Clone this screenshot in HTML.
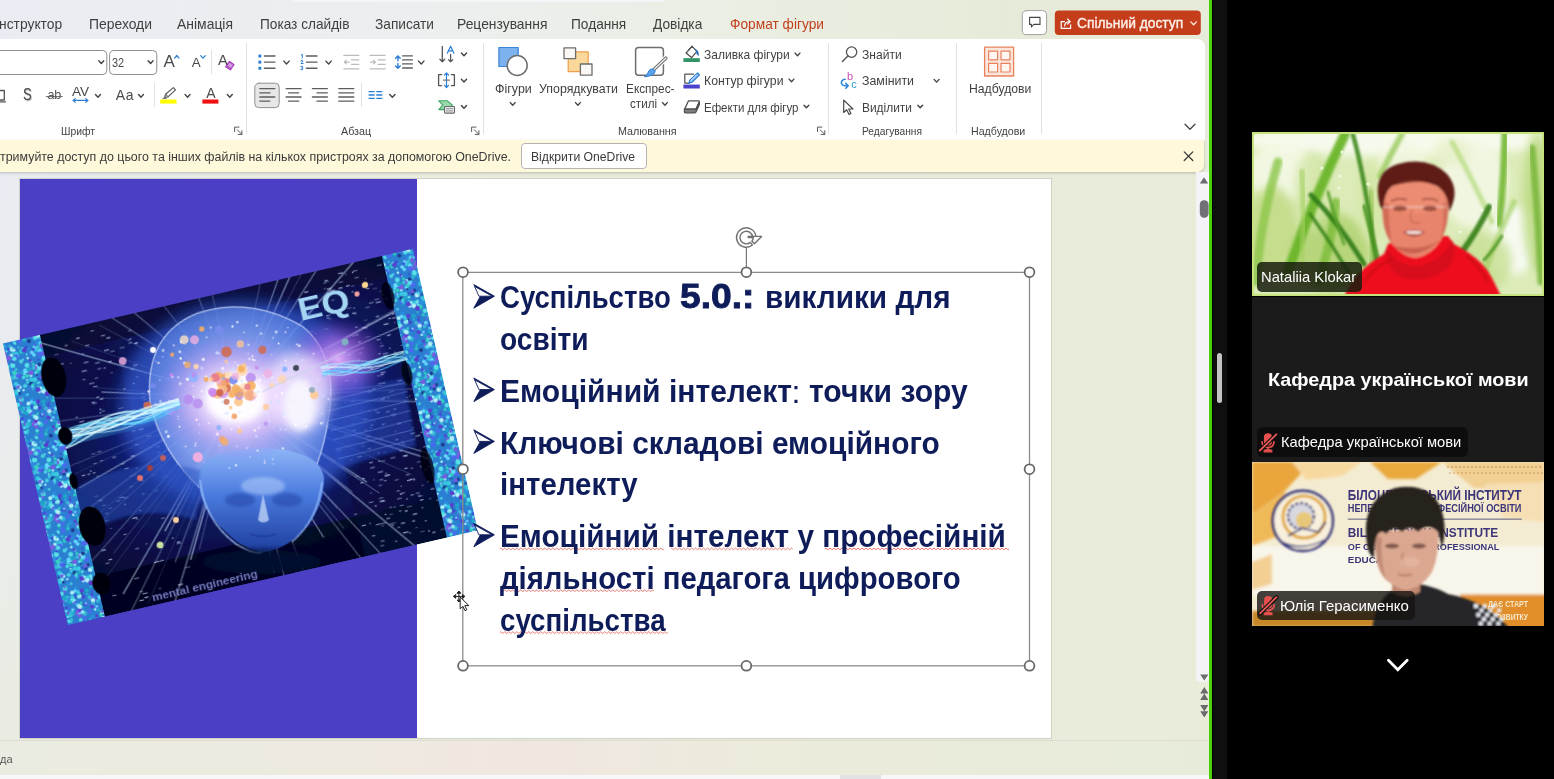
<!DOCTYPE html>
<html lang="uk">
<head>
<meta charset="utf-8">
<title>Zoom - PowerPoint share</title>
<style>
html,body{margin:0;padding:0;background:#000;}
body{width:1554px;height:779px;overflow:hidden;position:relative;font-family:"Liberation Sans",sans-serif;}
.abs{position:absolute;}
#ppt{position:absolute;left:0;top:0;width:1209px;height:779px;overflow:hidden;
  background:linear-gradient(90deg,#e9edf3 0px,#ecefef 420px,#eaeee2 760px,#e6ebd9 1000px,#e7ecda 1209px);}
#work{position:absolute;left:0;top:172px;width:1209px;height:568px;
  background:linear-gradient(90deg,rgba(233,236,221,0) 0px,rgba(233,236,221,.55) 200px,#e9ecdc 520px,#e9ecdb 900px,#e8ecd9 1209px),linear-gradient(180deg,#e9ecf2 0,#e9ecee 40%,#eaece2 100%);}
#ribbon{position:absolute;left:-12px;top:39px;width:1217px;height:101px;background:#fff;border-radius:8px 8px 0 0;}
#ybar{position:absolute;left:-12px;top:140px;width:1216px;height:32px;background:#fff9db;border-radius:0 0 7px 7px;box-shadow:0 1px 3px rgba(0,0,0,.22);}
#botbar{position:absolute;left:0;top:740px;width:1209px;height:35px;border-top:1px solid #dcdcd4;box-sizing:border-box;
  background:linear-gradient(90deg,#ebece1 0px,#eeeadf 330px,#f1e7e1 520px,#ecebdc 760px,#e7ecda 1209px);}
#botstrip{position:absolute;left:0;top:775px;width:1209px;height:4px;background:#f7f7f9;}
#green{position:absolute;left:1208.6px;top:0;width:3.9px;height:779px;background:#4bd10a;}
#zoom{position:absolute;left:1213px;top:0;width:341px;height:779px;background:#000;}
#zgut{position:absolute;left:0;top:0;width:14px;height:779px;background:#0f0f0f;}
.t{position:absolute;white-space:pre;line-height:1;margin:0;padding:0;}
.sep{position:absolute;width:1px;background:#e1e1e1;}
svg{position:absolute;overflow:visible;}
</style>
</head>
<body>

<div id="ppt">
<div class="abs" style="left:292px;top:0;width:372px;height:2px;background:#f4f5f7;border-radius:0 0 3px 3px;"></div>
<div id="work"></div>
<div id="ribbon"></div>
<div id="ybar"></div>
<!-- ribbon group separators -->
<div class="sep" style="left:246px;top:43px;height:91px;"></div>
<div class="sep" style="left:483px;top:43px;height:91px;"></div>
<div class="sep" style="left:828px;top:43px;height:91px;"></div>
<div class="sep" style="left:956px;top:43px;height:91px;"></div>
<div class="sep" style="left:1041px;top:43px;height:91px;"></div>
<div class="sep" style="left:211px;top:50px;height:24px;"></div>
<div class="sep" style="left:154px;top:83px;height:24px;"></div>
<div class="sep" style="left:361px;top:83px;height:24px;"></div>
<!-- OneDrive button -->
<div class="abs" style="left:521.3px;top:143.4px;width:125.4px;height:25.2px;box-sizing:border-box;background:#fff;border:1px solid #b4b4b4;border-radius:4px;"></div>
<svg id="ico" width="1209" height="180" viewBox="0 0 1209 180" style="left:0;top:0;" fill="none" stroke-linecap="round" stroke-linejoin="round">
<!-- font boxes -->
<rect x="-6" y="50.5" width="112.8" height="24" rx="4" fill="#fff" stroke="#8e8e8e"/>
<rect x="109.6" y="50.5" width="47.2" height="24" rx="4" fill="#fff" stroke="#8e8e8e"/>
<!-- chevrons -->
<g stroke="#444" stroke-width="1.4">
<path d="M98.8 60.8l2.49 2.73 2.49-2.73"/>
<path d="M148.1 60.8l2.49 2.73 2.49-2.73"/>
<path d="M95.5 94.5l2.49 2.73 2.49-2.73"/>
<path d="M138.5 94.5l2.49 2.73 2.49-2.73"/>
<path d="M185.1 94.5l2.49 2.73 2.49-2.73"/>
<path d="M227.3 94.5l2.49 2.73 2.49-2.73"/>
<path d="M283.8 61.1l2.67 2.90 2.67-2.90"/>
<path d="M325.9 61.1l2.67 2.90 2.67-2.90"/>
<path d="M418.6 61.1l2.67 2.90 2.67-2.90"/>
<path d="M461.4 53.0l2.58 2.82 2.58-2.82"/>
<path d="M461.4 79.2l2.58 2.82 2.58-2.82"/>
<path d="M461.4 105.5l2.58 2.82 2.58-2.82"/>
<path d="M389.7 94.5l2.67 2.82 2.67-2.82"/>
<path d="M510.3 102.6l2.41 2.64 2.41-2.64"/>
<path d="M575.5 102.6l2.41 2.64 2.41-2.64"/>
<path d="M662.5 102.6l2.41 2.64 2.41-2.64"/>
<path d="M795.1 53.1l2.41 2.64 2.41-2.64"/>
<path d="M789.1 79.1l2.41 2.64 2.41-2.64"/>
<path d="M804.0 105.2l2.41 2.64 2.41-2.64"/>
<path d="M934.1 79.4l2.49 2.73 2.49-2.73"/>
<path d="M917.8 105.2l2.41 2.64 2.41-2.64"/>
<path d="M1185 124.3l5 5 5-5" stroke-width="1.3"/>
</g>
<!-- grow / shrink carets, clear-format eraser -->
<path d="M174.6 58.2l2.2-2.7 2.2 2.7" stroke="#2b7cd3" stroke-width="1.2"/>
<path d="M200.7 55.6l2.3 2.6 2.3-2.6" stroke="#2b7cd3" stroke-width="1.2"/>
<path d="M229.3 61.6l4.6 3-3.6 5.2-4.6-3z" fill="#d79be2" stroke="#a93fc0" stroke-width="1.3"/>
<path d="M226.6 65.7l4.5 3" stroke="#b14bc4" stroke-width="1.2"/>
<!-- row2: underline fragment, strikethrough line, AV arrows -->
<path d="M-1 90.5h5.3v9.5h-5.3M-1 101.8h6.5" stroke="#555" stroke-width="1.3"/>
<path d="M46.3 96.6h16" stroke="#666" stroke-width="1"/>
<path d="M73 100.4h15M75.3 98.6l-2.3 1.8 2.3 1.8M85.7 98.6l2.3 1.8-2.3 1.8" stroke="#2b7cd3" stroke-width="1.15"/>
<!-- highlighter -->
<rect x="160.2" y="99.5" width="16.3" height="4.1" fill="#ffff00"/>
<path d="M173.3 87.6l2.2 2.2-7.3 6.9-3.6.9.9-3.3z" fill="#fff" stroke="#555" stroke-width="1.15"/>
<path d="M165.5 94.3l2.7 2.4" stroke="#555" stroke-width="1"/>
<path d="M164.6 97.6l-2 .9 3.6.1z" fill="#777" stroke="#777" stroke-width=".8"/>
<!-- font colour bar -->
<rect x="202.4" y="99.5" width="16" height="4.1" fill="#f01010"/>
<!-- bullets -->
<g fill="#2b7cd3" stroke="none"><rect x="258.4" y="54.6" width="2.9" height="2.9"/><rect x="258.4" y="60.7" width="2.9" height="2.9"/><rect x="258.4" y="66.8" width="2.9" height="2.9"/></g>
<path d="M264.4 56h10.6M264.4 62.1h10.6M264.4 68.2h10.6" stroke="#5d5d5d" stroke-width="1.35"/>
<!-- numbering -->
<g stroke="#2b7cd3" stroke-width="1"><path d="M301.2 55l1.1-.7v3.7"/><path d="M300.9 60.8q1.6-1.1 2 0.1q0.1.9-2 2.6h2.3"/><path d="M300.9 66.4q2.3-.6 2 .7q-.2.8-1.3.9q1.5.1 1.4 1.1q-.2 1.2-2.2.7"/></g>
<path d="M306.3 56h10.7M306.3 62.1h10.7M306.3 68.2h10.7" stroke="#5d5d5d" stroke-width="1.35"/>
<!-- indents (disabled) -->
<g stroke="#bcbcbc" stroke-width="1.3"><path d="M343.9 55.4h14.9M343.9 68.9h14.9M351.5 59.9h7.3M351.5 64.4h7.3M344.3 62.1h5M346.2 60.3l-1.9 1.8 1.9 1.8"/>
<path d="M370.2 55.4h14.9M370.2 68.9h14.9M378 59.9h7.1M378 64.4h7.1M370.4 62.1h5M373.5 60.3l1.9 1.8-1.9 1.8"/></g>
<!-- line spacing -->
<path d="M397.9 56v4.8M395.6 58.3l2.3-2.4 2.3 2.4M397.9 63.4v4.8M395.6 65.9l2.3 2.4 2.3-2.4" stroke="#2b7cd3" stroke-width="1.4"/>
<path d="M402.6 55.9h9.8M402.6 59.9h9.8M402.6 63.9h9.8M402.6 68h9.8" stroke="#5d5d5d" stroke-width="1.35"/>
<!-- text direction -->
<path d="M442.3 46.4v15.4M439.9 59.2l2.4 2.6 2.4-2.6" stroke="#555" stroke-width="1.3"/>
<path d="M447.3 53.2l3.3-7 3.3 7M448.4 50.9h4.4" stroke="#2b7cd3" stroke-width="1.2"/>
<path d="M450.6 54.4v7.4M448.5 59.6l2.1 2.2 2.1-2.2" stroke="#555" stroke-width="1.25"/>
<!-- align text -->
<path d="M441.6 74.6h-3v11h3M451.4 74.6h3v11h-3" stroke="#555" stroke-width="1.3"/>
<path d="M446.5 73v14.4M444.5 75l2-2.1 2 2.1M444.5 85.4l2 2.1 2-2.1" stroke="#2b7cd3" stroke-width="1.2"/>
<path d="M443.5 80.1h6" stroke="#777" stroke-width="1.1"/>
<!-- smartart -->
<path d="M438.8 100.8h8.6l5 4.3-5 4.5h-8.6l4-4.4z" fill="#9ad8ae" stroke="#3fa660" stroke-width="1.1"/>
<rect x="444.5" y="106.5" width="10" height="6.6" rx=".8" fill="#e8e8e8" stroke="#6a6a6a" stroke-width="1.1"/>
<path d="M446.4 108.7h6.2M446.4 110.9h6.2" stroke="#8a8a8a" stroke-width=".9"/>
<!-- alignment row -->
<rect x="254.8" y="83.2" width="24.4" height="24.4" rx="4" fill="#e7e7e7" stroke="#8f8f8f"/>
<g stroke="#5d5d5d" stroke-width="1.3">
<path d="M259.8 88.6h15M259.8 92.8h10.3M259.8 97h15M259.8 101.2h10"/>
<path d="M286.1 88.6h15M288.5 92.8h10.2M286.1 97h15M288.5 101.2h10.2"/>
<path d="M312.4 88.6h15M317 92.8h10.4M312.4 97h15M317 101.2h10.4"/>
<path d="M338.8 88.6h15M338.8 92.8h15M338.8 97h15M338.8 101.2h15"/>
</g>
<path d="M368.6 91.7h6M376.3 91.7h6M368.6 95h6M376.3 95h6M368.6 98.3h6M376.3 98.3h6" stroke="#2b7cd3" stroke-width="1.3" stroke-linecap="butt"/>
<!-- dialog launchers -->
<g stroke="#5a5a5a" stroke-width="1">
<path d="M234.6 131.5v-4.4h4.4M237.3 129.8l4.4 4.4M241.9 130.7v3.7h-3.7"/>
<path d="M471.6 131.5v-4.4h4.4M474.3 129.8l4.4 4.4M478.9 130.7v3.7h-3.7"/>
<path d="M817.5 131.5v-4.4h4.4M820.2 129.8l4.4 4.4M824.8 130.7v3.7h-3.7"/>
</g>
<!-- shapes -->
<rect x="498.9" y="47.5" width="19.3" height="19" fill="#7cb2ee" stroke="#3a86d8" stroke-width="1.2"/>
<circle cx="517.2" cy="65.5" r="10" fill="#fff" stroke="#6e6e6e" stroke-width="1.5"/>
<!-- arrange -->
<rect x="568.2" y="51.8" width="20" height="19.8" fill="#fad79a" stroke="#ef9f4e" stroke-width="1.2"/>
<rect x="564" y="47.8" width="11.6" height="10.8" fill="#fbf7f4" stroke="#6e6e6e" stroke-width="1.3"/>
<rect x="580.4" y="64" width="11.6" height="11.2" fill="#fbf7f4" stroke="#6e6e6e" stroke-width="1.3"/>
<!-- quick styles -->
<rect x="635.6" y="47.6" width="27.8" height="27.6" rx="3" fill="#fff" stroke="#6e6e6e" stroke-width="1.5"/>
<path d="M666 58L653.4 70" stroke="#fff" stroke-width="5.4"/>
<path d="M666 58L653.4 70" stroke="#6a6a6a" stroke-width="3.2"/>
<path d="M666 58L653.4 70" stroke="#f2f2f2" stroke-width="1.3"/>
<path d="M655.2 71.4q-.6 4.6-10.8 5.4q3.4-2 3.8-4.6q1.2-3.6 4.8-3.2z" fill="#5aa2ec" stroke="#2f7fd6" stroke-width="1"/>
<!-- shape fill -->
<rect x="683.4" y="58.2" width="16.4" height="3.8" fill="#2f9468"/>
<path d="M692 46.4l5 4.9-5.4 6.3-5.5-4.6z" fill="#fff" stroke="#505050" stroke-width="1.25"/>
<path d="M688.9 49.9l3.4-3.7" stroke="#505050" stroke-width="1.2"/>
<path d="M695.6 49.8q3 .6 2.9 5.6q-1.7-.3-1.9-2.8z" fill="#2b6fc0" stroke="#2b6fc0" stroke-width=".7"/>
<!-- shape outline -->
<rect x="683.4" y="84.6" width="16.4" height="3.9" fill="#4a42cf"/>
<path d="M693.4 74.2h-8.6v8.8h4.6" stroke="#555" stroke-width="1.25"/>
<path d="M697.6 73l1.9 1.9-7.5 7.3-3 .9.8-3z" fill="#8fc0f4" stroke="#2b7cd3" stroke-width="1.2"/>
<path d="M696.3 75.2l-5.4 5.2" stroke="#eaf3fd" stroke-width=".9"/>
<!-- shape effects -->
<path d="M688.4 100.9h10.2q1 .1.7 1l-3.4 7.3h-11.3z" fill="#fff" stroke="#4d4d4d" stroke-width="1.3"/>
<path d="M684.4 109.2v2.6q0 1 1 1h9.6q.7 0 1-.7l3.4-7.6v-2.8l-3.5 7.5z" fill="#7d7d7d" stroke="#4d4d4d" stroke-width="1.2"/>
<!-- find -->
<circle cx="851.6" cy="52.1" r="5.2" stroke="#555" stroke-width="1.3"/>
<path d="M847.9 55.9l-5.5 5.7" stroke="#555" stroke-width="1.4"/>
<!-- replace -->
<path d="M845.2 79.2q-4 .6-3.8 3.8q.4 2.8 4.2 2.8h2.4M845.8 83.4l2.4 2.4-2.4 2.4" stroke="#2b86d8" stroke-width="1.6"/>
<!-- select cursor -->
<path d="M843.7 100.2v12.3l3-2.7 2.3 4.7 1.9-.9-2.2-4.6h4.3z" fill="#fff" stroke="#444" stroke-width="1.15"/>
<!-- add-ins -->
<rect x="984.6" y="47.2" width="29" height="28.8" fill="#fbe6de" stroke="#e8825a" stroke-width="1.3"/>
<g fill="#fff6f2" stroke="#e8825a" stroke-width="1.2"><rect x="988.6" y="51.2" width="9" height="8.6"/><rect x="1001" y="51.2" width="9" height="8.6"/><rect x="988.6" y="63.4" width="9" height="8.6"/><rect x="1001" y="63.4" width="9" height="8.6"/></g>
<!-- comment & share buttons -->
<rect x="1022.3" y="10.6" width="24.3" height="24" rx="4" fill="#fff" stroke="#a0a0a0"/>
<path d="M1029.6 17.4h10.4v7h-6.2l-2.4 2.6v-2.6h-1.8z" stroke="#444" stroke-width="1.1"/>
<rect x="1054.8" y="10.5" width="146" height="24.4" rx="4" fill="#c43e1c" stroke="none"/>
<path d="M1064.6 21.6h-3.4v6.8h9.4v-3.6" stroke="#fff" stroke-width="1.2"/>
<path d="M1064.6 26q.4-4.2 5-4.4M1067.6 19l2.6 2.6-2.6 2.6" stroke="#fff" stroke-width="1.2"/>
<path d="M1190.8 21.9l2.8 2.8 2.8-2.8" stroke="#fff1ea" stroke-width="1.3"/>
<!-- ybar close -->
<path d="M1184.2 151.9l8.6 8.6M1192.8 151.9l-8.6 8.6" stroke="#333" stroke-width="1.2"/>
</svg>

<!-- slide -->
<div class="abs" style="left:20px;top:179px;width:1031px;height:558.6px;background:#fff;box-shadow:0 0 0 1px rgba(160,160,150,.35);"></div>
<div class="abs" style="left:20px;top:179px;width:397px;height:558.5px;background:#4b40c5;"></div>

<svg id="brain" width="1209" height="779" viewBox="0 0 1209 779" style="left:0;top:0;">
<defs>
<clipPath id="bclip"><rect x="0" y="0" width="421" height="289"/></clipPath>
<filter id="bl1" x="-5%" y="-5%" width="110%" height="110%"><feGaussianBlur stdDeviation="0.7"/></filter>
<filter id="bl2" x="-20%" y="-20%" width="140%" height="140%"><feGaussianBlur stdDeviation="1.6"/></filter>
<filter id="bl3" x="-20%" y="-20%" width="140%" height="140%"><feGaussianBlur stdDeviation="3"/></filter>
<filter id="bl6" x="-30%" y="-30%" width="160%" height="160%"><feGaussianBlur stdDeviation="7"/></filter>
<radialGradient id="bgG" cx="0.53" cy="0.42" r="0.6"><stop offset="0" stop-color="#2f50c4"/><stop offset="0.38" stop-color="#15288e"/><stop offset="0.62" stop-color="#0b1458"/><stop offset="1" stop-color="#060a34"/></radialGradient>
<radialGradient id="burst"><stop offset="0" stop-color="#fff"/><stop offset="0.3" stop-color="#fdf0ff" stop-opacity=".95"/><stop offset="0.6" stop-color="#dcb4f6" stop-opacity=".6"/><stop offset="1" stop-color="#8a6ae8" stop-opacity="0"/></radialGradient>
<radialGradient id="dome" cx=".5" cy=".55" r=".6"><stop offset="0" stop-color="#dfe8ff" stop-opacity=".9"/><stop offset="0.6" stop-color="#93aef4" stop-opacity=".8"/><stop offset="1" stop-color="#4f7ce4" stop-opacity=".6"/></radialGradient>
<radialGradient id="pinkG"><stop offset="0" stop-color="#f1b6ff" stop-opacity=".9"/><stop offset="0.5" stop-color="#b46ae6" stop-opacity=".55"/><stop offset="1" stop-color="#7a40c8" stop-opacity="0"/></radialGradient>
<linearGradient id="faceG" x1="0" y1="0" x2="0" y2="1"><stop offset="0" stop-color="#8fb6f8"/><stop offset="0.45" stop-color="#4a7ade"/><stop offset="1" stop-color="#1d3e9e"/></linearGradient>
</defs>
<g transform="translate(240.5 437) rotate(-13) translate(-210.5 -144.5)" clip-path="url(#bclip)"><g filter="url(#bl1)">
<rect x="-2" y="-2" width="425" height="293" fill="url(#bgG)"/>
<rect x="30" y="0" width="360" height="22" fill="#050828" opacity=".5"/>
<rect x="30" y="248" width="360" height="44" fill="#03051c" opacity=".8"/>
<rect x="305" y="125" width="90" height="170" fill="#060a3a" opacity=".5"/>
<rect x="30" y="30" width="80" height="70" fill="#060a3a" opacity=".35"/>
<line x1="214.9" y1="105.5" x2="145.2" y2="244.7" stroke="#cfe2ff" stroke-width="1.3" opacity="0.23"/>
<line x1="214.9" y1="105.5" x2="27.6" y2="62.5" stroke="#cfe2ff" stroke-width="0.6" opacity="0.38"/>
<line x1="214.9" y1="105.5" x2="413.0" y2="153.0" stroke="#cfe2ff" stroke-width="0.6" opacity="0.23"/>
<line x1="214.9" y1="105.5" x2="-25.8" y2="229.0" stroke="#cfe2ff" stroke-width="0.7" opacity="0.28"/>
<line x1="214.9" y1="105.5" x2="12.2" y2="-103.5" stroke="#cfe2ff" stroke-width="1.3" opacity="0.34"/>
<line x1="214.9" y1="105.5" x2="351.3" y2="85.0" stroke="#cfe2ff" stroke-width="1.6" opacity="0.30"/>
<line x1="214.9" y1="105.5" x2="307.4" y2="223.6" stroke="#cfe2ff" stroke-width="0.9" opacity="0.49"/>
<line x1="214.9" y1="105.5" x2="311.4" y2="313.0" stroke="#cfe2ff" stroke-width="1.3" opacity="0.33"/>
<line x1="214.9" y1="105.5" x2="80.5" y2="63.9" stroke="#cfe2ff" stroke-width="0.6" opacity="0.27"/>
<line x1="214.9" y1="105.5" x2="129.0" y2="-78.1" stroke="#cfe2ff" stroke-width="0.9" opacity="0.40"/>
<line x1="214.9" y1="105.5" x2="41.7" y2="158.0" stroke="#cfe2ff" stroke-width="1.5" opacity="0.44"/>
<line x1="214.9" y1="105.5" x2="223.3" y2="333.0" stroke="#cfe2ff" stroke-width="1.2" opacity="0.51"/>
<line x1="214.9" y1="105.5" x2="191.8" y2="-72.0" stroke="#cfe2ff" stroke-width="1.8" opacity="0.24"/>
<line x1="214.9" y1="105.5" x2="-10.3" y2="232.8" stroke="#cfe2ff" stroke-width="0.7" opacity="0.37"/>
<line x1="214.9" y1="105.5" x2="451.1" y2="164.9" stroke="#cfe2ff" stroke-width="1.5" opacity="0.40"/>
<line x1="214.9" y1="105.5" x2="344.9" y2="-23.8" stroke="#cfe2ff" stroke-width="1.4" opacity="0.41"/>
<line x1="214.9" y1="105.5" x2="32.9" y2="5.6" stroke="#cfe2ff" stroke-width="1.6" opacity="0.53"/>
<line x1="214.9" y1="105.5" x2="-24.8" y2="144.8" stroke="#cfe2ff" stroke-width="0.6" opacity="0.45"/>
<line x1="214.9" y1="105.5" x2="34.9" y2="-133.1" stroke="#cfe2ff" stroke-width="1.6" opacity="0.30"/>
<line x1="214.9" y1="105.5" x2="31.3" y2="265.7" stroke="#cfe2ff" stroke-width="0.5" opacity="0.36"/>
<line x1="214.9" y1="105.5" x2="288.7" y2="236.0" stroke="#cfe2ff" stroke-width="0.6" opacity="0.47"/>
<line x1="214.9" y1="105.5" x2="333.2" y2="230.4" stroke="#cfe2ff" stroke-width="1.0" opacity="0.50"/>
<line x1="214.9" y1="105.5" x2="395.4" y2="205.6" stroke="#cfe2ff" stroke-width="1.2" opacity="0.51"/>
<line x1="214.9" y1="105.5" x2="331.6" y2="-145.6" stroke="#cfe2ff" stroke-width="0.9" opacity="0.35"/>
<line x1="214.9" y1="105.5" x2="37.9" y2="322.8" stroke="#cfe2ff" stroke-width="1.7" opacity="0.25"/>
<line x1="214.9" y1="105.5" x2="290.7" y2="257.0" stroke="#cfe2ff" stroke-width="0.8" opacity="0.37"/>
<line x1="214.9" y1="105.5" x2="66.9" y2="12.7" stroke="#cfe2ff" stroke-width="0.5" opacity="0.35"/>
<line x1="214.9" y1="105.5" x2="60.8" y2="271.2" stroke="#cfe2ff" stroke-width="1.7" opacity="0.44"/>
<line x1="214.9" y1="105.5" x2="-19.0" y2="82.7" stroke="#cfe2ff" stroke-width="1.4" opacity="0.22"/>
<line x1="214.9" y1="105.5" x2="426.9" y2="-49.5" stroke="#cfe2ff" stroke-width="1.6" opacity="0.48"/>
<line x1="214.9" y1="105.5" x2="60.6" y2="229.3" stroke="#cfe2ff" stroke-width="0.6" opacity="0.42"/>
<line x1="214.9" y1="105.5" x2="345.7" y2="159.4" stroke="#cfe2ff" stroke-width="0.8" opacity="0.26"/>
<line x1="214.9" y1="105.5" x2="140.4" y2="222.8" stroke="#cfe2ff" stroke-width="0.5" opacity="0.25"/>
<line x1="214.9" y1="105.5" x2="369.0" y2="219.7" stroke="#cfe2ff" stroke-width="0.5" opacity="0.51"/>
<line x1="214.9" y1="105.5" x2="97.8" y2="3.5" stroke="#cfe2ff" stroke-width="0.8" opacity="0.32"/>
<line x1="214.9" y1="105.5" x2="115.7" y2="219.2" stroke="#cfe2ff" stroke-width="1.6" opacity="0.55"/>
<line x1="214.9" y1="105.5" x2="7.5" y2="150.5" stroke="#cfe2ff" stroke-width="0.6" opacity="0.24"/>
<line x1="214.9" y1="105.5" x2="118.7" y2="251.7" stroke="#cfe2ff" stroke-width="1.6" opacity="0.26"/>
<line x1="214.9" y1="105.5" x2="503.5" y2="147.7" stroke="#cfe2ff" stroke-width="1.2" opacity="0.25"/>
<line x1="214.9" y1="105.5" x2="85.2" y2="69.4" stroke="#cfe2ff" stroke-width="1.2" opacity="0.54"/>
<line x1="214.9" y1="105.5" x2="377.2" y2="-82.5" stroke="#cfe2ff" stroke-width="0.8" opacity="0.33"/>
<line x1="214.9" y1="105.5" x2="345.0" y2="332.0" stroke="#cfe2ff" stroke-width="1.2" opacity="0.47"/>
<line x1="214.9" y1="105.5" x2="134.3" y2="252.8" stroke="#cfe2ff" stroke-width="1.6" opacity="0.54"/>
<line x1="214.9" y1="105.5" x2="375.4" y2="-107.9" stroke="#cfe2ff" stroke-width="1.6" opacity="0.46"/>
<line x1="214.9" y1="105.5" x2="246.6" y2="321.2" stroke="#cfe2ff" stroke-width="1.0" opacity="0.21"/>
<line x1="214.9" y1="105.5" x2="389.7" y2="136.5" stroke="#cfe2ff" stroke-width="0.8" opacity="0.44"/>
<line x1="214.9" y1="105.5" x2="413.3" y2="49.9" stroke="#cfe2ff" stroke-width="1.7" opacity="0.55"/>
<line x1="214.9" y1="105.5" x2="399.3" y2="51.9" stroke="#cfe2ff" stroke-width="0.8" opacity="0.28"/>
<line x1="214.9" y1="105.5" x2="269.0" y2="261.1" stroke="#cfe2ff" stroke-width="1.3" opacity="0.52"/>
<line x1="214.9" y1="105.5" x2="328.7" y2="-72.8" stroke="#cfe2ff" stroke-width="1.3" opacity="0.48"/>
<line x1="214.9" y1="105.5" x2="423.6" y2="228.5" stroke="#cfe2ff" stroke-width="1.7" opacity="0.47"/>
<line x1="214.9" y1="105.5" x2="215.1" y2="-105.8" stroke="#cfe2ff" stroke-width="0.7" opacity="0.48"/>
<line x1="214.9" y1="105.5" x2="83.0" y2="336.7" stroke="#cfe2ff" stroke-width="1.8" opacity="0.34"/>
<line x1="214.9" y1="105.5" x2="-22.0" y2="274.4" stroke="#cfe2ff" stroke-width="1.4" opacity="0.26"/>
<line x1="214.9" y1="105.5" x2="323.6" y2="217.0" stroke="#cfe2ff" stroke-width="1.7" opacity="0.48"/>
<line x1="214.9" y1="105.5" x2="379.1" y2="320.4" stroke="#cfe2ff" stroke-width="1.8" opacity="0.43"/>
<line x1="214.9" y1="105.5" x2="83.2" y2="285.8" stroke="#cfe2ff" stroke-width="0.7" opacity="0.20"/>
<line x1="214.9" y1="105.5" x2="451.3" y2="61.8" stroke="#cfe2ff" stroke-width="1.2" opacity="0.53"/>
<line x1="214.9" y1="105.5" x2="-39.6" y2="217.9" stroke="#cfe2ff" stroke-width="1.6" opacity="0.27"/>
<line x1="214.9" y1="105.5" x2="212.8" y2="285.3" stroke="#cfe2ff" stroke-width="0.8" opacity="0.41"/>
<rect x="328.9" y="103.6" width="3.3" height="1.1" fill="#d4e4ff" opacity="0.59"/>
<rect x="382.4" y="42.1" width="2.1" height="1.1" fill="#d4e4ff" opacity="0.56"/>
<rect x="118.8" y="53.6" width="3.4" height="1.1" fill="#d4e4ff" opacity="0.66"/>
<rect x="355.2" y="139.2" width="4.6" height="1.1" fill="#d4e4ff" opacity="0.74"/>
<rect x="47.0" y="146.1" width="3.7" height="1.1" fill="#d4e4ff" opacity="0.68"/>
<rect x="361.7" y="173.3" width="2.3" height="1.1" fill="#d4e4ff" opacity="0.44"/>
<rect x="86.7" y="199.0" width="5.0" height="1.1" fill="#d4e4ff" opacity="0.77"/>
<rect x="349.2" y="43.8" width="2.0" height="1.1" fill="#d4e4ff" opacity="0.52"/>
<rect x="325.0" y="89.6" width="2.0" height="1.1" fill="#d4e4ff" opacity="0.69"/>
<rect x="356.6" y="249.7" width="5.4" height="1.1" fill="#d4e4ff" opacity="0.41"/>
<rect x="353.1" y="235.8" width="2.1" height="1.1" fill="#d4e4ff" opacity="0.52"/>
<rect x="329.8" y="31.4" width="3.0" height="1.1" fill="#d4e4ff" opacity="0.47"/>
<rect x="346.1" y="178.2" width="3.5" height="1.1" fill="#d4e4ff" opacity="0.33"/>
<rect x="128.7" y="29.2" width="2.6" height="1.1" fill="#d4e4ff" opacity="0.75"/>
<rect x="375.7" y="232.0" width="2.5" height="1.1" fill="#d4e4ff" opacity="0.37"/>
<rect x="122.9" y="83.0" width="4.7" height="1.1" fill="#d4e4ff" opacity="0.39"/>
<rect x="120.8" y="227.2" width="1.8" height="1.1" fill="#d4e4ff" opacity="0.73"/>
<rect x="375.9" y="280.4" width="3.2" height="1.1" fill="#d4e4ff" opacity="0.76"/>
<rect x="96.7" y="273.5" width="2.5" height="1.1" fill="#d4e4ff" opacity="0.39"/>
<rect x="124.0" y="86.0" width="3.5" height="1.1" fill="#d4e4ff" opacity="0.39"/>
<rect x="72.5" y="11.1" width="3.5" height="1.1" fill="#d4e4ff" opacity="0.79"/>
<rect x="350.4" y="232.0" width="3.2" height="1.1" fill="#d4e4ff" opacity="0.55"/>
<rect x="354.5" y="65.4" width="2.4" height="1.1" fill="#d4e4ff" opacity="0.40"/>
<rect x="364.1" y="277.0" width="4.8" height="1.1" fill="#d4e4ff" opacity="0.31"/>
<rect x="97.0" y="29.3" width="4.9" height="1.1" fill="#d4e4ff" opacity="0.74"/>
<rect x="324.8" y="18.5" width="2.2" height="1.1" fill="#d4e4ff" opacity="0.43"/>
<rect x="342.4" y="95.3" width="1.6" height="1.1" fill="#d4e4ff" opacity="0.74"/>
<rect x="61.2" y="137.0" width="3.5" height="1.1" fill="#d4e4ff" opacity="0.40"/>
<rect x="86.4" y="45.7" width="3.8" height="1.1" fill="#d4e4ff" opacity="0.50"/>
<rect x="325.7" y="241.5" width="2.1" height="1.1" fill="#d4e4ff" opacity="0.75"/>
<rect x="372.0" y="277.8" width="2.1" height="1.1" fill="#d4e4ff" opacity="0.66"/>
<rect x="376.8" y="179.1" width="4.4" height="1.1" fill="#d4e4ff" opacity="0.71"/>
<rect x="54.3" y="234.1" width="3.8" height="1.1" fill="#d4e4ff" opacity="0.75"/>
<rect x="102.1" y="17.6" width="4.0" height="1.1" fill="#d4e4ff" opacity="0.78"/>
<rect x="75.1" y="178.8" width="4.2" height="1.1" fill="#d4e4ff" opacity="0.54"/>
<rect x="370.9" y="253.8" width="1.9" height="1.1" fill="#d4e4ff" opacity="0.56"/>
<rect x="341.7" y="70.8" width="4.5" height="1.1" fill="#d4e4ff" opacity="0.42"/>
<rect x="99.2" y="138.2" width="4.2" height="1.1" fill="#d4e4ff" opacity="0.68"/>
<rect x="96.3" y="97.6" width="4.1" height="1.1" fill="#d4e4ff" opacity="0.65"/>
<rect x="311.7" y="80.2" width="4.2" height="1.1" fill="#d4e4ff" opacity="0.65"/>
<rect x="325.6" y="134.6" width="4.6" height="1.1" fill="#d4e4ff" opacity="0.80"/>
<rect x="327.4" y="10.8" width="3.3" height="1.1" fill="#d4e4ff" opacity="0.71"/>
<rect x="127.2" y="259.0" width="5.2" height="1.1" fill="#d4e4ff" opacity="0.34"/>
<rect x="365.8" y="42.6" width="4.8" height="1.1" fill="#d4e4ff" opacity="0.55"/>
<rect x="361.9" y="114.8" width="2.1" height="1.1" fill="#d4e4ff" opacity="0.77"/>
<rect x="335.7" y="100.9" width="2.8" height="1.1" fill="#d4e4ff" opacity="0.72"/>
<rect x="42.2" y="265.4" width="2.3" height="1.1" fill="#d4e4ff" opacity="0.31"/>
<rect x="322.3" y="281.7" width="3.9" height="1.1" fill="#d4e4ff" opacity="0.48"/>
<rect x="79.7" y="20.2" width="4.1" height="1.1" fill="#d4e4ff" opacity="0.62"/>
<rect x="385.5" y="58.4" width="3.0" height="1.1" fill="#d4e4ff" opacity="0.78"/>
<rect x="362.9" y="157.6" width="4.4" height="1.1" fill="#d4e4ff" opacity="0.32"/>
<rect x="371.2" y="246.0" width="3.4" height="1.1" fill="#d4e4ff" opacity="0.76"/>
<rect x="315.0" y="88.2" width="4.5" height="1.1" fill="#d4e4ff" opacity="0.79"/>
<rect x="340.5" y="190.6" width="2.0" height="1.1" fill="#d4e4ff" opacity="0.62"/>
<rect x="375.2" y="66.7" width="5.1" height="1.1" fill="#d4e4ff" opacity="0.80"/>
<rect x="81.6" y="54.2" width="3.7" height="1.1" fill="#d4e4ff" opacity="0.46"/>
<rect x="74.4" y="212.9" width="3.2" height="1.1" fill="#d4e4ff" opacity="0.51"/>
<rect x="88.1" y="143.5" width="3.8" height="1.1" fill="#d4e4ff" opacity="0.48"/>
<rect x="102.4" y="31.6" width="5.1" height="1.1" fill="#d4e4ff" opacity="0.49"/>
<rect x="98.8" y="41.1" width="3.2" height="1.1" fill="#d4e4ff" opacity="0.68"/>
<rect x="112.8" y="114.1" width="5.2" height="1.1" fill="#d4e4ff" opacity="0.71"/>
<rect x="117.3" y="67.8" width="2.1" height="1.1" fill="#d4e4ff" opacity="0.79"/>
<rect x="372.6" y="29.5" width="4.6" height="1.1" fill="#d4e4ff" opacity="0.30"/>
<rect x="322.6" y="89.8" width="2.0" height="1.1" fill="#d4e4ff" opacity="0.43"/>
<rect x="98.0" y="88.9" width="5.3" height="1.1" fill="#d4e4ff" opacity="0.40"/>
<rect x="320.1" y="89.2" width="3.3" height="1.1" fill="#d4e4ff" opacity="0.78"/>
<rect x="98.7" y="157.0" width="1.6" height="1.1" fill="#d4e4ff" opacity="0.51"/>
<rect x="333.2" y="184.6" width="1.8" height="1.1" fill="#d4e4ff" opacity="0.41"/>
<rect x="353.5" y="99.3" width="3.2" height="1.1" fill="#d4e4ff" opacity="0.64"/>
<rect x="370.3" y="24.6" width="3.5" height="1.1" fill="#d4e4ff" opacity="0.40"/>
<rect x="317.1" y="215.9" width="2.7" height="1.1" fill="#d4e4ff" opacity="0.78"/>
<rect x="316.5" y="257.3" width="1.7" height="1.1" fill="#d4e4ff" opacity="0.60"/>
<rect x="321.6" y="45.2" width="1.7" height="1.1" fill="#d4e4ff" opacity="0.33"/>
<rect x="380.1" y="37.2" width="1.8" height="1.1" fill="#d4e4ff" opacity="0.38"/>
<rect x="357.4" y="14.8" width="4.2" height="1.1" fill="#d4e4ff" opacity="0.49"/>
<rect x="74.9" y="27.6" width="1.8" height="1.1" fill="#d4e4ff" opacity="0.51"/>
<rect x="349.4" y="104.4" width="4.8" height="1.1" fill="#d4e4ff" opacity="0.71"/>
<rect x="304.3" y="155.5" width="3.3" height="1.1" fill="#d4e4ff" opacity="0.46"/>
<rect x="106.9" y="230.1" width="4.6" height="1.1" fill="#d4e4ff" opacity="0.32"/>
<rect x="305.5" y="59.8" width="1.8" height="1.1" fill="#d4e4ff" opacity="0.60"/>
<rect x="73.9" y="78.4" width="4.4" height="1.1" fill="#d4e4ff" opacity="0.46"/>
<rect x="371.4" y="267.2" width="1.8" height="1.1" fill="#d4e4ff" opacity="0.71"/>
<rect x="363.0" y="224.0" width="5.2" height="1.1" fill="#d4e4ff" opacity="0.71"/>
<rect x="320.6" y="89.7" width="4.3" height="1.1" fill="#d4e4ff" opacity="0.38"/>
<rect x="351.3" y="27.8" width="2.3" height="1.1" fill="#d4e4ff" opacity="0.68"/>
<rect x="322.3" y="156.3" width="2.1" height="1.1" fill="#d4e4ff" opacity="0.51"/>
<rect x="51.3" y="32.6" width="3.5" height="1.1" fill="#d4e4ff" opacity="0.65"/>
<rect x="348.3" y="252.0" width="2.4" height="1.1" fill="#d4e4ff" opacity="0.57"/>
<rect x="366.8" y="87.1" width="3.8" height="1.1" fill="#d4e4ff" opacity="0.49"/>
<rect x="106.9" y="71.0" width="2.6" height="1.1" fill="#d4e4ff" opacity="0.75"/>
<rect x="58.6" y="146.0" width="2.4" height="1.1" fill="#d4e4ff" opacity="0.70"/>
<rect x="387.2" y="249.7" width="2.4" height="1.1" fill="#d4e4ff" opacity="0.52"/>
<rect x="74.9" y="58.3" width="5.4" height="1.1" fill="#d4e4ff" opacity="0.59"/>
<rect x="332.8" y="172.4" width="4.6" height="1.1" fill="#d4e4ff" opacity="0.63"/>
<rect x="356.1" y="66.1" width="3.0" height="1.1" fill="#d4e4ff" opacity="0.37"/>
<rect x="360.8" y="258.3" width="4.8" height="1.1" fill="#d4e4ff" opacity="0.71"/>
<rect x="78.0" y="62.1" width="4.7" height="1.1" fill="#d4e4ff" opacity="0.57"/>
<rect x="346.9" y="48.7" width="3.6" height="1.1" fill="#d4e4ff" opacity="0.63"/>
<rect x="387.2" y="90.9" width="5.3" height="1.1" fill="#d4e4ff" opacity="0.46"/>
<rect x="331.4" y="183.9" width="3.1" height="1.1" fill="#d4e4ff" opacity="0.50"/>
<rect x="124.9" y="232.4" width="3.1" height="1.1" fill="#d4e4ff" opacity="0.74"/>
<rect x="321.0" y="45.3" width="4.7" height="1.1" fill="#d4e4ff" opacity="0.50"/>
<rect x="92.4" y="46.3" width="2.6" height="1.1" fill="#d4e4ff" opacity="0.56"/>
<rect x="123.4" y="89.2" width="4.8" height="1.1" fill="#d4e4ff" opacity="0.32"/>
<rect x="361.3" y="113.1" width="5.1" height="1.1" fill="#d4e4ff" opacity="0.61"/>
<rect x="114.6" y="177.4" width="4.0" height="1.1" fill="#d4e4ff" opacity="0.40"/>
<rect x="322.8" y="49.2" width="2.9" height="1.1" fill="#d4e4ff" opacity="0.37"/>
<rect x="333.1" y="238.5" width="4.2" height="1.1" fill="#d4e4ff" opacity="0.63"/>
<rect x="351.0" y="220.8" width="4.1" height="1.1" fill="#d4e4ff" opacity="0.45"/>
<rect x="345.0" y="127.0" width="1.6" height="1.1" fill="#d4e4ff" opacity="0.61"/>
<rect x="320.7" y="236.9" width="4.7" height="1.1" fill="#d4e4ff" opacity="0.50"/>
<rect x="331.6" y="145.2" width="4.1" height="1.1" fill="#d4e4ff" opacity="0.32"/>
<rect x="341.3" y="147.2" width="1.7" height="1.1" fill="#d4e4ff" opacity="0.55"/>
<rect x="75.3" y="280.9" width="4.4" height="1.1" fill="#d4e4ff" opacity="0.71"/>
<rect x="59.0" y="195.4" width="4.4" height="1.1" fill="#d4e4ff" opacity="0.41"/>
<rect x="353.7" y="253.4" width="2.6" height="1.1" fill="#d4e4ff" opacity="0.71"/>
<rect x="54.6" y="169.4" width="4.0" height="1.1" fill="#d4e4ff" opacity="0.42"/>
<rect x="347.4" y="264.4" width="4.2" height="1.1" fill="#d4e4ff" opacity="0.75"/>
<rect x="327.8" y="19.4" width="4.9" height="1.1" fill="#d4e4ff" opacity="0.78"/>
<rect x="81.9" y="75.6" width="3.6" height="1.1" fill="#d4e4ff" opacity="0.73"/>
<rect x="332.7" y="165.4" width="2.9" height="1.1" fill="#d4e4ff" opacity="0.68"/>
<rect x="80.9" y="87.8" width="3.6" height="1.1" fill="#d4e4ff" opacity="0.46"/>
<rect x="376.6" y="208.3" width="4.5" height="1.1" fill="#d4e4ff" opacity="0.41"/>
<rect x="355.1" y="253.2" width="2.0" height="1.1" fill="#d4e4ff" opacity="0.41"/>
<rect x="302.0" y="89.8" width="3.6" height="1.1" fill="#d4e4ff" opacity="0.57"/>
<rect x="326.5" y="178.2" width="3.4" height="1.1" fill="#d4e4ff" opacity="0.37"/>
<rect x="124.4" y="23.6" width="2.1" height="1.1" fill="#d4e4ff" opacity="0.63"/>
<rect x="65.7" y="184.0" width="3.7" height="1.1" fill="#d4e4ff" opacity="0.48"/>
<rect x="383.7" y="142.0" width="2.2" height="1.1" fill="#d4e4ff" opacity="0.30"/>
<rect x="47.4" y="22.1" width="4.6" height="1.1" fill="#d4e4ff" opacity="0.31"/>
<rect x="90.5" y="149.0" width="4.1" height="1.1" fill="#d4e4ff" opacity="0.62"/>
<rect x="78.5" y="88.9" width="1.7" height="1.1" fill="#d4e4ff" opacity="0.74"/>
<rect x="363.0" y="211.7" width="3.4" height="1.1" fill="#d4e4ff" opacity="0.67"/>
<rect x="81.8" y="183.7" width="2.0" height="1.1" fill="#d4e4ff" opacity="0.75"/>
<rect x="123.4" y="79.4" width="3.7" height="1.1" fill="#d4e4ff" opacity="0.52"/>
<rect x="338.0" y="262.3" width="5.1" height="1.1" fill="#d4e4ff" opacity="0.34"/>
<rect x="381.5" y="62.0" width="2.1" height="1.1" fill="#d4e4ff" opacity="0.76"/>
<rect x="334.2" y="256.5" width="4.0" height="1.1" fill="#d4e4ff" opacity="0.65"/>
<rect x="351.9" y="198.5" width="4.9" height="1.1" fill="#d4e4ff" opacity="0.52"/>
<rect x="105.8" y="114.1" width="3.8" height="1.1" fill="#d4e4ff" opacity="0.58"/>
<rect x="327.6" y="262.4" width="2.9" height="1.1" fill="#d4e4ff" opacity="0.37"/>
<rect x="367.1" y="17.8" width="1.8" height="1.1" fill="#d4e4ff" opacity="0.32"/>
<rect x="333.6" y="252.0" width="1.8" height="1.1" fill="#d4e4ff" opacity="0.73"/>
<rect x="122.5" y="62.1" width="1.6" height="1.1" fill="#d4e4ff" opacity="0.77"/>
<rect x="325.9" y="180.5" width="3.4" height="1.1" fill="#d4e4ff" opacity="0.37"/>
<rect x="356.9" y="123.0" width="1.6" height="1.1" fill="#d4e4ff" opacity="0.43"/>
<rect x="363.0" y="218.3" width="3.9" height="1.1" fill="#d4e4ff" opacity="0.54"/>
<rect x="67.3" y="126.5" width="4.6" height="1.1" fill="#d4e4ff" opacity="0.47"/>
<rect x="104.0" y="164.6" width="2.6" height="1.1" fill="#d4e4ff" opacity="0.52"/>
<rect x="88.1" y="7.2" width="3.5" height="1.1" fill="#d4e4ff" opacity="0.55"/>
<rect x="316.2" y="270.2" width="3.6" height="1.1" fill="#d4e4ff" opacity="0.59"/>
<rect x="56.0" y="143.5" width="1.9" height="1.1" fill="#d4e4ff" opacity="0.62"/>
<rect x="49.1" y="179.3" width="2.9" height="1.1" fill="#d4e4ff" opacity="0.50"/>
<rect x="325.9" y="12.9" width="2.3" height="1.1" fill="#d4e4ff" opacity="0.43"/>
<rect x="345.8" y="70.5" width="3.3" height="1.1" fill="#d4e4ff" opacity="0.57"/>
<rect x="366.3" y="166.5" width="3.6" height="1.1" fill="#d4e4ff" opacity="0.73"/>
<rect x="348.7" y="127.1" width="4.6" height="1.1" fill="#d4e4ff" opacity="0.59"/>
<rect x="53.1" y="146.1" width="2.6" height="1.1" fill="#d4e4ff" opacity="0.68"/>
<rect x="114.7" y="205.6" width="3.9" height="1.1" fill="#d4e4ff" opacity="0.47"/>
<rect x="337.6" y="280.6" width="2.2" height="1.1" fill="#d4e4ff" opacity="0.63"/>
<rect x="313.3" y="208.4" width="3.2" height="1.1" fill="#d4e4ff" opacity="0.40"/>
<rect x="309.4" y="134.0" width="1.6" height="1.1" fill="#d4e4ff" opacity="0.73"/>
<rect x="319.6" y="133.9" width="2.1" height="1.1" fill="#d4e4ff" opacity="0.60"/>
<rect x="365.2" y="199.5" width="3.8" height="1.1" fill="#d4e4ff" opacity="0.62"/>
<rect x="364.4" y="199.2" width="4.9" height="1.1" fill="#d4e4ff" opacity="0.64"/>
<rect x="341.3" y="199.4" width="5.1" height="1.1" fill="#d4e4ff" opacity="0.42"/>
<rect x="362.7" y="139.2" width="1.6" height="1.1" fill="#d4e4ff" opacity="0.73"/>
<rect x="379.4" y="96.5" width="1.5" height="1.1" fill="#d4e4ff" opacity="0.72"/>
<rect x="121.9" y="50.4" width="4.6" height="1.1" fill="#d4e4ff" opacity="0.77"/>
<rect x="359.1" y="62.6" width="3.4" height="1.1" fill="#d4e4ff" opacity="0.31"/>
<rect x="343.3" y="267.6" width="2.3" height="1.1" fill="#d4e4ff" opacity="0.64"/>
<rect x="328.3" y="104.1" width="1.7" height="1.1" fill="#d4e4ff" opacity="0.44"/>
<rect x="301.2" y="179.5" width="4.2" height="1.1" fill="#d4e4ff" opacity="0.59"/>
<rect x="347.2" y="274.1" width="5.5" height="1.1" fill="#d4e4ff" opacity="0.78"/>
<rect x="82.7" y="229.4" width="4.0" height="1.1" fill="#d4e4ff" opacity="0.53"/>
<rect x="319.9" y="189.8" width="4.8" height="1.1" fill="#d4e4ff" opacity="0.70"/>
<rect x="371.7" y="40.5" width="4.8" height="1.1" fill="#d4e4ff" opacity="0.48"/>
<rect x="323.5" y="277.3" width="4.2" height="1.1" fill="#d4e4ff" opacity="0.54"/>
<rect x="344.3" y="89.3" width="3.4" height="1.1" fill="#d4e4ff" opacity="0.51"/>
<rect x="358.0" y="241.8" width="1.7" height="1.1" fill="#d4e4ff" opacity="0.71"/>
<rect x="369.0" y="180.8" width="1.6" height="1.1" fill="#d4e4ff" opacity="0.31"/>
<rect x="125.8" y="165.7" width="4.9" height="1.1" fill="#d4e4ff" opacity="0.39"/>
<rect x="369.1" y="224.5" width="2.2" height="1.1" fill="#d4e4ff" opacity="0.75"/>
<rect x="365.5" y="223.5" width="4.9" height="1.1" fill="#d4e4ff" opacity="0.40"/>
<rect x="346.7" y="191.3" width="2.0" height="1.1" fill="#d4e4ff" opacity="0.36"/>
<rect x="352.2" y="22.1" width="3.4" height="1.1" fill="#d4e4ff" opacity="0.37"/>
<rect x="356.7" y="7.8" width="4.9" height="1.1" fill="#d4e4ff" opacity="0.53"/>
<rect x="358.5" y="123.5" width="5.5" height="1.1" fill="#d4e4ff" opacity="0.64"/>
<rect x="57.9" y="174.3" width="4.2" height="1.1" fill="#d4e4ff" opacity="0.77"/>
<rect x="386.4" y="215.0" width="2.1" height="1.1" fill="#d4e4ff" opacity="0.41"/>
<rect x="326.4" y="107.1" width="3.4" height="1.1" fill="#d4e4ff" opacity="0.56"/>
<rect x="318.5" y="75.4" width="1.7" height="1.1" fill="#d4e4ff" opacity="0.44"/>
<rect x="343.4" y="246.9" width="2.9" height="1.1" fill="#d4e4ff" opacity="0.40"/>
<rect x="333.1" y="88.6" width="3.8" height="1.1" fill="#d4e4ff" opacity="0.62"/>
<rect x="303.5" y="156.5" width="1.7" height="1.1" fill="#d4e4ff" opacity="0.45"/>
<rect x="382.7" y="217.4" width="1.7" height="1.1" fill="#d4e4ff" opacity="0.55"/>
<rect x="330.0" y="198.2" width="3.9" height="1.1" fill="#d4e4ff" opacity="0.64"/>
<rect x="60.7" y="34.0" width="2.2" height="1.1" fill="#d4e4ff" opacity="0.32"/>
<rect x="380.4" y="246.7" width="2.1" height="1.1" fill="#d4e4ff" opacity="0.45"/>
<rect x="104.5" y="93.9" width="3.2" height="1.1" fill="#d4e4ff" opacity="0.62"/>
<rect x="124.2" y="233.6" width="4.6" height="1.1" fill="#d4e4ff" opacity="0.51"/>
<rect x="324.6" y="112.9" width="3.9" height="1.1" fill="#d4e4ff" opacity="0.77"/>
<rect x="128.3" y="28.9" width="3.4" height="1.1" fill="#d4e4ff" opacity="0.75"/>
<rect x="320.6" y="39.6" width="5.4" height="1.1" fill="#d4e4ff" opacity="0.34"/>
<rect x="321.2" y="163.0" width="3.3" height="1.1" fill="#d4e4ff" opacity="0.67"/>
<rect x="370.8" y="242.1" width="4.4" height="1.1" fill="#d4e4ff" opacity="0.34"/>
<rect x="362.4" y="258.1" width="1.7" height="1.1" fill="#d4e4ff" opacity="0.32"/>
<rect x="366.7" y="28.0" width="2.7" height="1.1" fill="#d4e4ff" opacity="0.66"/>
<rect x="56.6" y="93.3" width="5.3" height="1.1" fill="#d4e4ff" opacity="0.66"/>
<rect x="83.3" y="106.3" width="4.1" height="1.1" fill="#d4e4ff" opacity="0.61"/>
<rect x="333.9" y="222.6" width="3.8" height="1.1" fill="#d4e4ff" opacity="0.45"/>
<rect x="367.8" y="97.6" width="3.9" height="1.1" fill="#d4e4ff" opacity="0.79"/>
<rect x="352.9" y="275.5" width="2.5" height="1.1" fill="#d4e4ff" opacity="0.49"/>
<rect x="367.9" y="84.2" width="1.5" height="1.1" fill="#d4e4ff" opacity="0.43"/>
<rect x="79.2" y="85.6" width="2.1" height="1.1" fill="#d4e4ff" opacity="0.75"/>
<rect x="386.3" y="195.0" width="5.2" height="1.1" fill="#d4e4ff" opacity="0.47"/>
<rect x="49.5" y="223.4" width="4.4" height="1.1" fill="#d4e4ff" opacity="0.79"/>
<rect x="346.9" y="63.0" width="2.5" height="1.1" fill="#d4e4ff" opacity="0.68"/>
<rect x="340.5" y="219.1" width="2.4" height="1.1" fill="#d4e4ff" opacity="0.59"/>
<rect x="377.9" y="145.7" width="2.3" height="1.1" fill="#d4e4ff" opacity="0.41"/>
<rect x="339.7" y="161.8" width="3.1" height="1.1" fill="#d4e4ff" opacity="0.56"/>
<rect x="303.9" y="245.1" width="3.0" height="1.1" fill="#d4e4ff" opacity="0.53"/>
<rect x="327.8" y="149.4" width="1.6" height="1.1" fill="#d4e4ff" opacity="0.32"/>
<rect x="353.1" y="64.9" width="5.2" height="1.1" fill="#d4e4ff" opacity="0.44"/>
<rect x="360.3" y="271.9" width="2.5" height="1.1" fill="#d4e4ff" opacity="0.32"/>
<rect x="59.7" y="15.6" width="3.0" height="1.1" fill="#d4e4ff" opacity="0.65"/>
<rect x="380.8" y="182.6" width="5.2" height="1.1" fill="#d4e4ff" opacity="0.65"/>
<rect x="49.9" y="270.0" width="4.2" height="1.1" fill="#d4e4ff" opacity="0.50"/>
<rect x="385.7" y="67.2" width="1.7" height="1.1" fill="#d4e4ff" opacity="0.43"/>
<rect x="73.0" y="77.2" width="3.6" height="1.1" fill="#d4e4ff" opacity="0.67"/>
<rect x="342.5" y="214.4" width="5.3" height="1.1" fill="#d4e4ff" opacity="0.64"/>
<rect x="68.3" y="135.9" width="3.0" height="1.1" fill="#d4e4ff" opacity="0.50"/>
<rect x="75.0" y="258.3" width="5.1" height="1.1" fill="#d4e4ff" opacity="0.53"/>
<rect x="122.3" y="27.5" width="4.0" height="1.1" fill="#d4e4ff" opacity="0.49"/>
<rect x="368.5" y="238.5" width="4.0" height="1.1" fill="#d4e4ff" opacity="0.53"/>
<rect x="352.5" y="107.0" width="2.8" height="1.1" fill="#d4e4ff" opacity="0.67"/>
<rect x="339.7" y="246.3" width="2.6" height="1.1" fill="#d4e4ff" opacity="0.51"/>
<rect x="323.9" y="227.9" width="2.5" height="1.1" fill="#d4e4ff" opacity="0.35"/>
<rect x="330.4" y="21.7" width="5.1" height="1.1" fill="#d4e4ff" opacity="0.63"/>
<rect x="342.0" y="214.3" width="5.4" height="1.1" fill="#d4e4ff" opacity="0.52"/>
<rect x="321.0" y="85.9" width="5.1" height="1.1" fill="#d4e4ff" opacity="0.33"/>
<rect x="105.9" y="128.0" width="3.5" height="1.1" fill="#d4e4ff" opacity="0.56"/>
<rect x="369.5" y="57.3" width="3.2" height="1.1" fill="#d4e4ff" opacity="0.76"/>
<rect x="61.2" y="150.0" width="2.4" height="1.1" fill="#d4e4ff" opacity="0.39"/>
<rect x="380.5" y="142.8" width="2.6" height="1.1" fill="#d4e4ff" opacity="0.40"/>
<rect x="375.2" y="91.0" width="1.5" height="1.1" fill="#d4e4ff" opacity="0.65"/>
<rect x="382.3" y="229.7" width="2.8" height="1.1" fill="#d4e4ff" opacity="0.72"/>
<rect x="343.4" y="42.8" width="4.2" height="1.1" fill="#d4e4ff" opacity="0.42"/>
<rect x="322.5" y="108.4" width="3.9" height="1.1" fill="#d4e4ff" opacity="0.30"/>
<rect x="87.7" y="104.5" width="2.5" height="1.1" fill="#d4e4ff" opacity="0.72"/>
<rect x="379.0" y="213.4" width="1.7" height="1.1" fill="#d4e4ff" opacity="0.74"/>
<rect x="354.9" y="228.0" width="2.0" height="1.1" fill="#d4e4ff" opacity="0.42"/>
<rect x="354.5" y="75.1" width="4.8" height="1.1" fill="#d4e4ff" opacity="0.32"/>
<rect x="50.5" y="237.1" width="4.0" height="1.1" fill="#d4e4ff" opacity="0.53"/>
<rect x="63.0" y="203.9" width="1.7" height="1.1" fill="#d4e4ff" opacity="0.36"/>
<rect x="85.4" y="39.5" width="5.0" height="1.1" fill="#d4e4ff" opacity="0.57"/>
<rect x="320.0" y="212.1" width="2.2" height="1.1" fill="#d4e4ff" opacity="0.71"/>
<rect x="348.6" y="151.1" width="3.1" height="1.1" fill="#d4e4ff" opacity="0.77"/>
<rect x="329.8" y="203.5" width="4.9" height="1.1" fill="#d4e4ff" opacity="0.58"/>
<rect x="347.2" y="20.8" width="3.6" height="1.1" fill="#d4e4ff" opacity="0.78"/>
<rect x="348.7" y="9.2" width="1.9" height="1.1" fill="#d4e4ff" opacity="0.39"/>
<rect x="70.5" y="44.5" width="5.4" height="1.1" fill="#d4e4ff" opacity="0.69"/>
<rect x="124.5" y="15.5" width="4.1" height="1.1" fill="#d4e4ff" opacity="0.43"/>
<rect x="101.7" y="177.5" width="2.5" height="1.1" fill="#d4e4ff" opacity="0.56"/>
<rect x="383.7" y="101.9" width="2.2" height="1.1" fill="#d4e4ff" opacity="0.33"/>
<rect x="126.4" y="134.7" width="3.6" height="1.1" fill="#d4e4ff" opacity="0.37"/>
<rect x="311.6" y="165.3" width="2.6" height="1.1" fill="#d4e4ff" opacity="0.67"/>
<rect x="350.9" y="163.4" width="4.1" height="1.1" fill="#d4e4ff" opacity="0.40"/>
<rect x="357.3" y="137.9" width="4.8" height="1.1" fill="#d4e4ff" opacity="0.32"/>
<rect x="357.1" y="115.4" width="5.2" height="1.1" fill="#d4e4ff" opacity="0.38"/>
<rect x="328.5" y="84.6" width="5.5" height="1.1" fill="#d4e4ff" opacity="0.45"/>
<rect x="314.0" y="127.4" width="1.7" height="1.1" fill="#d4e4ff" opacity="0.49"/>
<rect x="80.7" y="279.0" width="4.2" height="1.1" fill="#d4e4ff" opacity="0.77"/>
<rect x="78.7" y="176.1" width="4.9" height="1.1" fill="#d4e4ff" opacity="0.71"/>
<rect x="365.0" y="80.2" width="4.0" height="1.1" fill="#d4e4ff" opacity="0.62"/>
<rect x="336.3" y="217.3" width="3.8" height="1.1" fill="#d4e4ff" opacity="0.55"/>
<rect x="350.3" y="246.9" width="3.9" height="1.1" fill="#d4e4ff" opacity="0.49"/>
<rect x="340.3" y="103.4" width="3.6" height="1.1" fill="#d4e4ff" opacity="0.60"/>
<rect x="300.6" y="111.1" width="2.7" height="1.1" fill="#d4e4ff" opacity="0.57"/>
<rect x="112.7" y="30.3" width="5.2" height="1.1" fill="#d4e4ff" opacity="0.46"/>
<rect x="116.2" y="274.3" width="5.1" height="1.1" fill="#d4e4ff" opacity="0.78"/>
<rect x="322.6" y="260.0" width="4.6" height="1.1" fill="#d4e4ff" opacity="0.57"/>
<rect x="355.2" y="124.7" width="3.4" height="1.1" fill="#d4e4ff" opacity="0.32"/>
<rect x="101.5" y="151.0" width="1.9" height="1.1" fill="#d4e4ff" opacity="0.49"/>
<rect x="77.3" y="272.2" width="3.4" height="1.1" fill="#d4e4ff" opacity="0.52"/>
<rect x="343.3" y="212.0" width="1.9" height="1.1" fill="#d4e4ff" opacity="0.48"/>
<rect x="74.3" y="36.5" width="5.1" height="1.1" fill="#d4e4ff" opacity="0.64"/>
<rect x="387.1" y="180.2" width="3.6" height="1.1" fill="#d4e4ff" opacity="0.71"/>
<rect x="60.3" y="179.9" width="3.9" height="1.1" fill="#d4e4ff" opacity="0.48"/>
<rect x="356.0" y="9.0" width="1.5" height="1.1" fill="#d4e4ff" opacity="0.66"/>
<rect x="90.7" y="167.8" width="4.2" height="1.1" fill="#d4e4ff" opacity="0.40"/>
<rect x="338.1" y="253.2" width="3.6" height="1.1" fill="#d4e4ff" opacity="0.37"/>
<rect x="329.9" y="215.6" width="1.9" height="1.1" fill="#d4e4ff" opacity="0.35"/>
<rect x="376.0" y="124.9" width="4.7" height="1.1" fill="#d4e4ff" opacity="0.63"/>
<rect x="102.2" y="103.7" width="2.2" height="1.1" fill="#d4e4ff" opacity="0.43"/>
<rect x="379.5" y="58.9" width="4.0" height="1.1" fill="#d4e4ff" opacity="0.31"/>
<rect x="61.4" y="127.3" width="4.0" height="1.1" fill="#d4e4ff" opacity="0.42"/>
<rect x="381.9" y="7.7" width="5.0" height="1.1" fill="#d4e4ff" opacity="0.53"/>
<rect x="78.8" y="73.0" width="3.1" height="1.1" fill="#d4e4ff" opacity="0.66"/>
<rect x="327.2" y="12.2" width="5.0" height="1.1" fill="#d4e4ff" opacity="0.34"/>
<rect x="333.4" y="115.3" width="3.0" height="1.1" fill="#d4e4ff" opacity="0.47"/>
<rect x="118.7" y="122.5" width="5.2" height="1.1" fill="#d4e4ff" opacity="0.58"/>
<rect x="341.1" y="15.6" width="4.2" height="1.1" fill="#d4e4ff" opacity="0.47"/>
<rect x="362.1" y="156.4" width="4.6" height="1.1" fill="#d4e4ff" opacity="0.58"/>
<rect x="370.0" y="103.4" width="4.4" height="1.1" fill="#d4e4ff" opacity="0.49"/>
<rect x="384.7" y="62.4" width="4.9" height="1.1" fill="#d4e4ff" opacity="0.64"/>
<rect x="387.8" y="168.2" width="3.0" height="1.1" fill="#d4e4ff" opacity="0.42"/>
<rect x="95.5" y="193.1" width="1.9" height="1.1" fill="#d4e4ff" opacity="0.73"/>
<rect x="322.0" y="162.7" width="2.7" height="1.1" fill="#d4e4ff" opacity="0.49"/>
<rect x="315.6" y="58.0" width="5.1" height="1.1" fill="#d4e4ff" opacity="0.33"/>
<rect x="122.4" y="24.2" width="2.7" height="1.1" fill="#d4e4ff" opacity="0.41"/>
<rect x="363.1" y="239.0" width="3.4" height="1.1" fill="#d4e4ff" opacity="0.61"/>
<rect x="97.3" y="14.2" width="4.2" height="1.1" fill="#d4e4ff" opacity="0.63"/>
<rect x="364.8" y="133.7" width="5.5" height="1.1" fill="#d4e4ff" opacity="0.50"/>
<rect x="308.6" y="257.9" width="4.4" height="1.1" fill="#d4e4ff" opacity="0.66"/>
<rect x="45.6" y="214.9" width="2.1" height="1.1" fill="#d4e4ff" opacity="0.67"/>
<rect x="384.0" y="237.7" width="3.8" height="1.1" fill="#d4e4ff" opacity="0.66"/>
<rect x="338.3" y="264.2" width="1.9" height="1.1" fill="#d4e4ff" opacity="0.68"/>
<rect x="379.5" y="173.6" width="1.7" height="1.1" fill="#d4e4ff" opacity="0.42"/>
<rect x="369.6" y="212.9" width="1.8" height="1.1" fill="#d4e4ff" opacity="0.65"/>
<rect x="365.8" y="151.5" width="2.9" height="1.1" fill="#d4e4ff" opacity="0.77"/>
<rect x="354.2" y="235.1" width="4.0" height="1.1" fill="#d4e4ff" opacity="0.53"/>
<rect x="349.1" y="239.7" width="4.6" height="1.1" fill="#d4e4ff" opacity="0.54"/>
<rect x="376.1" y="78.1" width="3.7" height="1.1" fill="#d4e4ff" opacity="0.78"/>
<rect x="98.1" y="52.4" width="2.9" height="1.1" fill="#d4e4ff" opacity="0.35"/>
<rect x="312.1" y="191.0" width="2.5" height="1.1" fill="#d4e4ff" opacity="0.42"/>
<rect x="339.2" y="198.7" width="2.0" height="1.1" fill="#d4e4ff" opacity="0.65"/>
<rect x="93.7" y="157.3" width="4.5" height="1.1" fill="#d4e4ff" opacity="0.38"/>
<rect x="352.7" y="235.4" width="2.0" height="1.1" fill="#d4e4ff" opacity="0.44"/>
<rect x="318.2" y="89.9" width="1.9" height="1.1" fill="#d4e4ff" opacity="0.45"/>
<rect x="350.3" y="106.2" width="2.2" height="1.1" fill="#d4e4ff" opacity="0.34"/>
<rect x="43.0" y="212.3" width="2.8" height="1.1" fill="#d4e4ff" opacity="0.67"/>
<rect x="356.8" y="58.4" width="3.7" height="1.1" fill="#d4e4ff" opacity="0.30"/>
<rect x="362.7" y="186.1" width="2.5" height="1.1" fill="#d4e4ff" opacity="0.42"/>
<rect x="54.2" y="87.8" width="2.2" height="1.1" fill="#d4e4ff" opacity="0.62"/>
<rect x="331.5" y="235.2" width="4.5" height="1.1" fill="#d4e4ff" opacity="0.46"/>
<rect x="372.6" y="43.6" width="5.2" height="1.1" fill="#d4e4ff" opacity="0.72"/>
<rect x="327.3" y="260.2" width="5.5" height="1.1" fill="#d4e4ff" opacity="0.50"/>
<rect x="348.8" y="49.5" width="2.7" height="1.1" fill="#d4e4ff" opacity="0.59"/>
<rect x="360.5" y="181.7" width="3.1" height="1.1" fill="#d4e4ff" opacity="0.79"/>
<rect x="342.2" y="6.8" width="4.9" height="1.1" fill="#d4e4ff" opacity="0.73"/>
<rect x="339.3" y="21.3" width="4.3" height="1.1" fill="#d4e4ff" opacity="0.75"/>
<rect x="47.5" y="255.5" width="2.2" height="1.1" fill="#d4e4ff" opacity="0.45"/>
<rect x="81.0" y="135.4" width="3.7" height="1.1" fill="#d4e4ff" opacity="0.56"/>
<rect x="79.7" y="274.9" width="5.3" height="1.1" fill="#d4e4ff" opacity="0.61"/>
<rect x="366.0" y="187.7" width="3.8" height="1.1" fill="#d4e4ff" opacity="0.51"/>
<rect x="357.8" y="152.4" width="4.0" height="1.1" fill="#d4e4ff" opacity="0.72"/>
<rect x="61.6" y="188.3" width="3.0" height="1.1" fill="#d4e4ff" opacity="0.59"/>
<rect x="346.6" y="78.1" width="2.4" height="1.1" fill="#d4e4ff" opacity="0.78"/>
<rect x="366.0" y="185.3" width="2.3" height="1.1" fill="#d4e4ff" opacity="0.64"/>
<rect x="351.2" y="164.1" width="2.0" height="1.1" fill="#d4e4ff" opacity="0.56"/>
<rect x="93.8" y="226.9" width="2.0" height="1.1" fill="#d4e4ff" opacity="0.55"/>
<rect x="384.5" y="279.4" width="4.4" height="1.1" fill="#d4e4ff" opacity="0.35"/>
<rect x="115.1" y="161.4" width="4.6" height="1.1" fill="#d4e4ff" opacity="0.37"/>
<rect x="305.1" y="17.5" width="4.3" height="1.1" fill="#d4e4ff" opacity="0.78"/>
<rect x="82.5" y="177.4" width="5.0" height="1.1" fill="#d4e4ff" opacity="0.58"/>
<rect x="331.4" y="238.2" width="4.7" height="1.1" fill="#d4e4ff" opacity="0.67"/>
<rect x="336.3" y="209.5" width="5.3" height="1.1" fill="#d4e4ff" opacity="0.66"/>
<rect x="326.8" y="96.4" width="3.9" height="1.1" fill="#d4e4ff" opacity="0.32"/>
<rect x="344.1" y="129.3" width="4.9" height="1.1" fill="#d4e4ff" opacity="0.59"/>
<rect x="301.8" y="57.1" width="3.7" height="1.1" fill="#d4e4ff" opacity="0.45"/>
<rect x="333.5" y="154.6" width="4.3" height="1.1" fill="#d4e4ff" opacity="0.70"/>
<rect x="125.5" y="140.5" width="3.4" height="1.1" fill="#d4e4ff" opacity="0.32"/>
<rect x="362.2" y="193.5" width="3.1" height="1.1" fill="#d4e4ff" opacity="0.54"/>
<rect x="346.8" y="148.7" width="2.9" height="1.1" fill="#d4e4ff" opacity="0.56"/>
<rect x="69.4" y="52.8" width="2.9" height="1.1" fill="#d4e4ff" opacity="0.53"/>
<rect x="92.8" y="98.6" width="3.4" height="1.1" fill="#d4e4ff" opacity="0.41"/>
<rect x="361.4" y="46.2" width="4.2" height="1.1" fill="#d4e4ff" opacity="0.44"/>
<rect x="337.8" y="164.3" width="3.8" height="1.1" fill="#d4e4ff" opacity="0.37"/>
<rect x="103.5" y="246.8" width="4.6" height="1.1" fill="#d4e4ff" opacity="0.62"/>
<rect x="97.8" y="246.9" width="5.3" height="1.1" fill="#d4e4ff" opacity="0.64"/>
<rect x="370.3" y="241.5" width="2.5" height="1.1" fill="#d4e4ff" opacity="0.74"/>
<rect x="367.9" y="95.2" width="5.5" height="1.1" fill="#d4e4ff" opacity="0.54"/>
<rect x="321.4" y="47.6" width="2.3" height="1.1" fill="#d4e4ff" opacity="0.74"/>
<rect x="335.6" y="262.5" width="3.8" height="1.1" fill="#d4e4ff" opacity="0.37"/>
<rect x="358.9" y="264.7" width="2.9" height="1.1" fill="#d4e4ff" opacity="0.76"/>
<rect x="332.2" y="103.6" width="3.4" height="1.1" fill="#d4e4ff" opacity="0.79"/>
<rect x="363.5" y="94.1" width="2.2" height="1.1" fill="#d4e4ff" opacity="0.75"/>
<rect x="90.1" y="200.4" width="2.4" height="1.1" fill="#d4e4ff" opacity="0.50"/>
<rect x="378.8" y="33.5" width="2.5" height="1.1" fill="#d4e4ff" opacity="0.33"/>
<g transform="translate(210.5 144.5) rotate(13) translate(-240.5 -437)">
<ellipse cx="245" cy="405" rx="125" ry="105" fill="#3c66dc" opacity=".6" filter="url(#bl6)"/>
<path d="M150 402 Q144 334 198 313 Q250 296 302 326 Q340 356 328 422 Q320 468 304 488 L204 492 Q160 452 150 402z" fill="url(#dome)" stroke="#dbe8ff" stroke-opacity=".7" stroke-width="1.3"/>
<path d="M198 474 Q204 450 262 448 Q320 450 324 478 Q324 512 298 536 Q278 552 262 552 Q244 550 226 532 Q198 508 198 474z" fill="url(#faceG)"/>
<ellipse cx="240" cy="500" rx="15" ry="7" fill="#2444a8" opacity=".55" filter="url(#bl2)"/>
<ellipse cx="287" cy="500" rx="15" ry="7" fill="#2444a8" opacity=".55" filter="url(#bl2)"/>
<ellipse cx="263" cy="486" rx="22" ry="9" fill="#c4dcff" opacity=".45" filter="url(#bl2)"/>
<path d="M200 480 Q204 520 236 544 Q256 556 262 552" stroke="#a8ccff" stroke-width="2" fill="none" opacity=".7" filter="url(#bl1)"/>
<path d="M322 482 Q318 520 292 542" stroke="#a8ccff" stroke-width="2" fill="none" opacity=".6" filter="url(#bl1)"/>
<path d="M263 494 L258 520 Q263 525 269 520z" fill="#cfe2ff" opacity=".7" filter="url(#bl1)"/>
<path d="M250 534 q13 5 26 0" stroke="#1e3c9c" stroke-width="2" fill="none" opacity=".7"/>
<ellipse cx="262" cy="562" rx="60" ry="12" fill="#040a30" opacity=".85" filter="url(#bl3)"/>
<path d="M322 398 L404 378 L416 446 L338 468z" fill="#2c4cc0" opacity=".55" filter="url(#bl2)"/>
<path d="M324.0 402.0 L406.0 382.0" stroke="#7fa0f0" stroke-width=".8" opacity=".5"/>
<path d="M326.3 411.5 L407.6 391.5" stroke="#7fa0f0" stroke-width=".8" opacity=".5"/>
<path d="M328.6 421.0 L409.2 401.0" stroke="#7fa0f0" stroke-width=".8" opacity=".5"/>
<path d="M330.9 430.5 L410.8 410.5" stroke="#7fa0f0" stroke-width=".8" opacity=".5"/>
<path d="M333.2 440.0 L412.4 420.0" stroke="#7fa0f0" stroke-width=".8" opacity=".5"/>
<path d="M335.5 449.5 L414.0 429.5" stroke="#7fa0f0" stroke-width=".8" opacity=".5"/>
<path d="M337.8 459.0 L415.6 439.0" stroke="#7fa0f0" stroke-width=".8" opacity=".5"/>
<path d="M60 500 Q120 452 200 470 L196 520 Q130 500 80 540z" fill="#2a52c0" opacity=".5" filter="url(#bl2)"/>
<ellipse cx="338" cy="360" rx="52" ry="44" fill="url(#pinkG)"/>
<ellipse cx="236" cy="398" rx="82" ry="64" fill="url(#burst)"/>
<ellipse cx="236" cy="398" rx="30" ry="24" fill="#fff" opacity=".9" filter="url(#bl3)"/>
<ellipse cx="298" cy="392" rx="34" ry="40" fill="#f4e4ff" opacity=".8" filter="url(#bl6)"/>
<ellipse cx="300" cy="405" rx="16" ry="26" fill="#fff" opacity=".75" filter="url(#bl3)"/>
<circle cx="250.3" cy="401.2" r="0.7" fill="#cfe0ff" opacity="0.89"/>
<circle cx="282.0" cy="393.1" r="1.2" fill="#fff" opacity="0.86"/>
<circle cx="272.1" cy="377.7" r="0.9" fill="#fff" opacity="0.86"/>
<circle cx="179.6" cy="426.7" r="0.9" fill="#fff" opacity="0.95"/>
<circle cx="246.1" cy="374.7" r="1.2" fill="#ffe8f8" opacity="1.00"/>
<circle cx="168.4" cy="436.4" r="1.4" fill="#fff" opacity="0.97"/>
<circle cx="156.0" cy="361.6" r="0.7" fill="#cfe0ff" opacity="0.66"/>
<circle cx="275.9" cy="395.6" r="1.1" fill="#fff" opacity="0.74"/>
<circle cx="208.7" cy="423.4" r="1.2" fill="#e8f0ff" opacity="0.86"/>
<circle cx="201.9" cy="368.1" r="1.3" fill="#cfe0ff" opacity="0.93"/>
<circle cx="228.5" cy="393.4" r="1.2" fill="#ffe8f8" opacity="0.82"/>
<circle cx="199.5" cy="432.8" r="0.8" fill="#cfe0ff" opacity="0.60"/>
<circle cx="169.4" cy="401.2" r="1.3" fill="#cfe0ff" opacity="0.66"/>
<circle cx="203.3" cy="359.4" r="1.5" fill="#fff" opacity="0.85"/>
<circle cx="285.9" cy="429.6" r="0.8" fill="#e8f0ff" opacity="0.70"/>
<circle cx="179.8" cy="351.8" r="1.4" fill="#e8f0ff" opacity="0.81"/>
<circle cx="195.7" cy="443.2" r="1.0" fill="#ffe8f8" opacity="0.69"/>
<circle cx="313.6" cy="353.7" r="1.0" fill="#e8f0ff" opacity="0.73"/>
<circle cx="259.9" cy="380.3" r="1.3" fill="#fff" opacity="0.92"/>
<circle cx="302.2" cy="360.2" r="0.9" fill="#e8f0ff" opacity="0.83"/>
<circle cx="166.2" cy="431.8" r="1.5" fill="#e8f0ff" opacity="0.61"/>
<circle cx="314.2" cy="400.3" r="0.8" fill="#cfe0ff" opacity="0.68"/>
<circle cx="244.1" cy="332.3" r="0.9" fill="#ffe8f8" opacity="0.69"/>
<circle cx="212.6" cy="381.1" r="1.4" fill="#cfe0ff" opacity="0.98"/>
<circle cx="269.2" cy="420.7" r="0.7" fill="#fff" opacity="0.79"/>
<circle cx="263.9" cy="375.5" r="1.2" fill="#ffe8f8" opacity="0.68"/>
<circle cx="315.2" cy="413.7" r="1.4" fill="#cfe0ff" opacity="0.62"/>
<circle cx="248.4" cy="344.9" r="1.0" fill="#e8f0ff" opacity="1.00"/>
<circle cx="237.1" cy="400.0" r="0.7" fill="#fff" opacity="0.65"/>
<circle cx="220.2" cy="440.8" r="0.9" fill="#e8f0ff" opacity="0.79"/>
<circle cx="196.7" cy="419.7" r="1.2" fill="#ffe8f8" opacity="0.95"/>
<circle cx="251.8" cy="390.7" r="0.8" fill="#fff" opacity="0.62"/>
<circle cx="201.8" cy="391.0" r="1.0" fill="#fff" opacity="0.89"/>
<circle cx="322.1" cy="413.8" r="0.7" fill="#fff" opacity="0.65"/>
<circle cx="212.3" cy="393.9" r="1.0" fill="#e8f0ff" opacity="0.69"/>
<circle cx="172.3" cy="377.1" r="1.1" fill="#fff" opacity="0.81"/>
<circle cx="287.8" cy="327.7" r="0.7" fill="#e8f0ff" opacity="0.94"/>
<circle cx="276.9" cy="386.5" r="0.7" fill="#e8f0ff" opacity="0.61"/>
<circle cx="229.3" cy="467.9" r="0.8" fill="#fff" opacity="0.76"/>
<circle cx="193.1" cy="377.2" r="0.6" fill="#fff" opacity="0.86"/>
<circle cx="178.2" cy="377.2" r="1.2" fill="#cfe0ff" opacity="0.76"/>
<circle cx="217.3" cy="434.1" r="1.5" fill="#ffe8f8" opacity="0.90"/>
<circle cx="299.4" cy="345.7" r="1.4" fill="#fff" opacity="0.70"/>
<circle cx="148.6" cy="391.5" r="1.2" fill="#ffe8f8" opacity="1.00"/>
<circle cx="272.9" cy="337.8" r="0.7" fill="#fff" opacity="0.96"/>
<circle cx="310.4" cy="411.2" r="0.9" fill="#ffe8f8" opacity="0.82"/>
<circle cx="203.8" cy="462.2" r="0.6" fill="#ffe8f8" opacity="0.80"/>
<circle cx="163.3" cy="349.4" r="0.8" fill="#ffe8f8" opacity="0.74"/>
<circle cx="323.4" cy="422.1" r="0.8" fill="#cfe0ff" opacity="0.63"/>
<circle cx="261.1" cy="333.7" r="1.4" fill="#cfe0ff" opacity="0.70"/>
<circle cx="285.4" cy="332.2" r="0.9" fill="#ffe8f8" opacity="0.83"/>
<circle cx="258.0" cy="391.9" r="1.3" fill="#cfe0ff" opacity="0.81"/>
<circle cx="159.9" cy="380.2" r="0.8" fill="#e8f0ff" opacity="0.66"/>
<circle cx="222.8" cy="368.5" r="1.5" fill="#fff" opacity="0.73"/>
<circle cx="185.6" cy="446.5" r="1.0" fill="#ffe8f8" opacity="0.66"/>
<circle cx="239.8" cy="411.9" r="0.9" fill="#cfe0ff" opacity="0.78"/>
<circle cx="284.9" cy="415.5" r="1.5" fill="#fff" opacity="0.78"/>
<circle cx="160.4" cy="401.2" r="1.3" fill="#e8f0ff" opacity="0.60"/>
<circle cx="280.8" cy="429.1" r="1.2" fill="#cfe0ff" opacity="0.81"/>
<circle cx="252.8" cy="359.6" r="1.1" fill="#fff" opacity="0.83"/>
<circle cx="270.6" cy="401.8" r="1.2" fill="#cfe0ff" opacity="0.97"/>
<circle cx="238.5" cy="427.2" r="1.0" fill="#ffe8f8" opacity="0.94"/>
<circle cx="256.4" cy="436.4" r="1.3" fill="#cfe0ff" opacity="0.97"/>
<circle cx="229.6" cy="349.6" r="0.6" fill="#cfe0ff" opacity="0.99"/>
<circle cx="178.1" cy="416.3" r="0.8" fill="#e8f0ff" opacity="0.75"/>
<circle cx="162.7" cy="356.7" r="0.8" fill="#cfe0ff" opacity="0.63"/>
<circle cx="264.4" cy="460.2" r="0.7" fill="#ffe8f8" opacity="0.75"/>
<circle cx="180.3" cy="383.7" r="1.4" fill="#fff" opacity="0.64"/>
<circle cx="158.6" cy="362.9" r="1.2" fill="#ffe8f8" opacity="0.77"/>
<circle cx="155.4" cy="404.0" r="1.0" fill="#ffe8f8" opacity="0.65"/>
<circle cx="240.1" cy="387.2" r="0.8" fill="#e8f0ff" opacity="0.76"/>
<circle cx="310.6" cy="407.6" r="1.1" fill="#ffe8f8" opacity="0.91"/>
<circle cx="267.4" cy="413.3" r="0.7" fill="#fff" opacity="0.64"/>
<circle cx="306.0" cy="426.6" r="1.1" fill="#fff" opacity="0.93"/>
<circle cx="254.8" cy="430.5" r="1.4" fill="#ffe8f8" opacity="0.94"/>
<circle cx="274.1" cy="427.1" r="0.6" fill="#e8f0ff" opacity="0.73"/>
<circle cx="273.4" cy="463.8" r="0.8" fill="#cfe0ff" opacity="0.81"/>
<circle cx="284.3" cy="414.7" r="1.2" fill="#cfe0ff" opacity="0.82"/>
<circle cx="185.4" cy="388.8" r="0.6" fill="#cfe0ff" opacity="0.70"/>
<circle cx="199.2" cy="424.4" r="1.1" fill="#cfe0ff" opacity="0.68"/>
<circle cx="300.0" cy="409.3" r="0.9" fill="#ffe8f8" opacity="0.86"/>
<circle cx="232.9" cy="368.7" r="1.4" fill="#cfe0ff" opacity="0.68"/>
<circle cx="296.6" cy="365.4" r="0.6" fill="#cfe0ff" opacity="0.60"/>
<circle cx="321.3" cy="423.2" r="1.3" fill="#fff" opacity="0.71"/>
<circle cx="252.5" cy="356.3" r="1.2" fill="#ffe8f8" opacity="0.76"/>
<circle cx="235.1" cy="362.3" r="0.8" fill="#e8f0ff" opacity="0.77"/>
<circle cx="230.4" cy="382.2" r="1.4" fill="#fff" opacity="0.93"/>
<circle cx="232.8" cy="392.1" r="1.2" fill="#e8f0ff" opacity="0.80"/>
<circle cx="206.5" cy="337.3" r="0.9" fill="#e8f0ff" opacity="0.81"/>
<circle cx="282.8" cy="448.4" r="1.2" fill="#fff" opacity="0.79"/>
<circle cx="246.6" cy="409.7" r="0.6" fill="#e8f0ff" opacity="0.86"/>
<circle cx="235.9" cy="465.4" r="1.2" fill="#e8f0ff" opacity="0.95"/>
<circle cx="264.4" cy="381.3" r="0.7" fill="#ffe8f8" opacity="0.72"/>
<circle cx="247.2" cy="448.0" r="0.9" fill="#e8f0ff" opacity="0.72"/>
<circle cx="236.8" cy="446.3" r="0.8" fill="#e8f0ff" opacity="0.76"/>
<circle cx="290.4" cy="401.0" r="1.2" fill="#e8f0ff" opacity="0.86"/>
<circle cx="228.0" cy="364.3" r="0.7" fill="#e8f0ff" opacity="0.77"/>
<circle cx="229.2" cy="372.8" r="1.3" fill="#fff" opacity="0.86"/>
<circle cx="257.6" cy="450.7" r="1.1" fill="#fff" opacity="0.72"/>
<circle cx="195.3" cy="445.6" r="1.0" fill="#fff" opacity="0.68"/>
<circle cx="231.6" cy="429.4" r="1.1" fill="#fff" opacity="0.68"/>
<circle cx="162.8" cy="404.3" r="1.3" fill="#e8f0ff" opacity="0.83"/>
<circle cx="219.5" cy="445.5" r="0.7" fill="#fff" opacity="0.74"/>
<circle cx="307.2" cy="371.3" r="0.6" fill="#cfe0ff" opacity="0.74"/>
<circle cx="193.1" cy="396.8" r="0.9" fill="#fff" opacity="0.92"/>
<circle cx="234.5" cy="407.0" r="1.1" fill="#fff" opacity="0.90"/>
<circle cx="263.4" cy="409.0" r="1.0" fill="#fff" opacity="0.61"/>
<circle cx="217.4" cy="390.4" r="1.2" fill="#e8f0ff" opacity="0.77"/>
<circle cx="250.2" cy="377.8" r="1.3" fill="#e8f0ff" opacity="0.74"/>
<circle cx="228.7" cy="376.3" r="0.6" fill="#ffe8f8" opacity="0.72"/>
<circle cx="238.3" cy="412.3" r="0.8" fill="#e8f0ff" opacity="0.80"/>
<circle cx="215.2" cy="387.2" r="1.0" fill="#e8f0ff" opacity="0.83"/>
<circle cx="279.2" cy="401.0" r="1.5" fill="#cfe0ff" opacity="0.76"/>
<circle cx="247.7" cy="413.7" r="0.8" fill="#e8f0ff" opacity="0.96"/>
<circle cx="328.4" cy="399.1" r="1.0" fill="#e8f0ff" opacity="0.88"/>
<circle cx="250.1" cy="457.1" r="0.7" fill="#cfe0ff" opacity="1.00"/>
<circle cx="178.4" cy="419.0" r="0.7" fill="#fff" opacity="0.63"/>
<circle cx="206.1" cy="376.6" r="1.1" fill="#fff" opacity="0.93"/>
<circle cx="283.0" cy="410.0" r="0.7" fill="#e8f0ff" opacity="0.85"/>
<circle cx="210.9" cy="327.6" r="0.9" fill="#ffe8f8" opacity="0.84"/>
<circle cx="258.9" cy="427.7" r="1.4" fill="#ffe8f8" opacity="0.61"/>
<circle cx="247.0" cy="367.9" r="1.1" fill="#e8f0ff" opacity="0.66"/>
<circle cx="224.2" cy="411.9" r="0.8" fill="#e8f0ff" opacity="0.87"/>
<circle cx="235.3" cy="377.1" r="0.6" fill="#ffe8f8" opacity="0.62"/>
<circle cx="193.3" cy="385.6" r="0.7" fill="#fff" opacity="0.68"/>
<circle cx="181.2" cy="342.1" r="1.3" fill="#fff" opacity="0.86"/>
<circle cx="305.5" cy="381.9" r="1.3" fill="#ffe8f8" opacity="0.87"/>
<circle cx="239.2" cy="368.6" r="1.3" fill="#cfe0ff" opacity="0.96"/>
<circle cx="237.4" cy="322.2" r="1.3" fill="#e8f0ff" opacity="0.77"/>
<circle cx="276.2" cy="332.0" r="1.4" fill="#cfe0ff" opacity="0.90"/>
<circle cx="180.6" cy="358.4" r="1.2" fill="#fff" opacity="0.99"/>
<circle cx="249.4" cy="358.8" r="1.4" fill="#e8f0ff" opacity="0.70"/>
<circle cx="184.5" cy="363.1" r="1.4" fill="#fff" opacity="0.76"/>
<circle cx="256.9" cy="325.6" r="1.2" fill="#cfe0ff" opacity="0.93"/>
<circle cx="222.3" cy="402.0" r="1.2" fill="#cfe0ff" opacity="0.87"/>
<circle cx="285.5" cy="365.5" r="0.9" fill="#cfe0ff" opacity="0.80"/>
<circle cx="264.4" cy="394.1" r="1.3" fill="#ffe8f8" opacity="0.76"/>
<circle cx="231.1" cy="415.4" r="1.1" fill="#fff" opacity="0.74"/>
<circle cx="278.6" cy="343.5" r="0.9" fill="#fff" opacity="1.00"/>
<circle cx="272.9" cy="459.1" r="1.0" fill="#e8f0ff" opacity="0.65"/>
<circle cx="234.4" cy="381.4" r="1.3" fill="#e8f0ff" opacity="0.76"/>
<circle cx="225.3" cy="413.8" r="0.8" fill="#cfe0ff" opacity="0.96"/>
<circle cx="173.8" cy="345.4" r="1.0" fill="#ffe8f8" opacity="0.73"/>
<circle cx="296.9" cy="344.5" r="1.1" fill="#e8f0ff" opacity="0.76"/>
<circle cx="323.5" cy="396.0" r="0.7" fill="#e8f0ff" opacity="0.78"/>
<circle cx="254.6" cy="360.3" r="0.9" fill="#fff" opacity="0.99"/>
<circle cx="232.5" cy="326.5" r="1.2" fill="#e8f0ff" opacity="0.97"/>
<circle cx="296.6" cy="354.2" r="0.7" fill="#cfe0ff" opacity="0.78"/>
<circle cx="288.2" cy="380.9" r="1.2" fill="#ffe8f8" opacity="0.98"/>
<circle cx="246.1" cy="378.6" r="1.2" fill="#ffe8f8" opacity="0.75"/>
<circle cx="256.3" cy="389.9" r="1.4" fill="#fff" opacity="0.82"/>
<circle cx="166.7" cy="413.2" r="1.4" fill="#ffe8f8" opacity="0.61"/>
<circle cx="227.3" cy="413.1" r="1.5" fill="#cfe0ff" opacity="0.66"/>
<circle cx="183.6" cy="362.7" r="0.6" fill="#ffe8f8" opacity="0.67"/>
<circle cx="163.0" cy="350.8" r="1.2" fill="#e8f0ff" opacity="0.72"/>
<circle cx="187.4" cy="379.3" r="1.5" fill="#fff" opacity="0.92"/>
<circle cx="217.0" cy="352.9" r="1.5" fill="#cfe0ff" opacity="0.88"/>
<circle cx="234.7" cy="417.8" r="1.1" fill="#fff" opacity="0.92"/>
<circle cx="223.8" cy="411.6" r="1.1" fill="#fff" opacity="0.66"/>
<circle cx="237.7" cy="365.1" r="0.9" fill="#fff" opacity="0.83"/>
<circle cx="317.8" cy="380.0" r="0.9" fill="#e8f0ff" opacity="0.71"/>
<circle cx="285.6" cy="360.5" r="1.2" fill="#ffe8f8" opacity="0.76"/>
<circle cx="219.2" cy="353.5" r="0.9" fill="#ffe8f8" opacity="0.71"/>
<circle cx="264.8" cy="462.6" r="1.0" fill="#ffe8f8" opacity="0.85"/>
<circle cx="248.2" cy="353.6" r="0.7" fill="#ffe8f8" opacity="0.86"/>
<circle cx="271.2" cy="354.6" r="0.7" fill="#ffe8f8" opacity="0.75"/>
<circle cx="294.6" cy="365.6" r="0.9" fill="#fff" opacity="0.70"/>
<circle cx="241.8" cy="380.6" r="1.3" fill="#cfe0ff" opacity="0.74"/>
<circle cx="278.6" cy="379.0" r="0.8" fill="#fff" opacity="0.95"/>
<circle cx="295.8" cy="424.8" r="1.3" fill="#fff" opacity="0.97"/>
<circle cx="238.5" cy="401.8" r="4.5" fill="#ffc890" opacity="0.94"/>
<circle cx="170.1" cy="409.5" r="5.2" fill="#b890f0" opacity="0.96"/>
<circle cx="188.3" cy="399.4" r="4.9" fill="#b890f0" opacity="0.97"/>
<circle cx="222.0" cy="384.0" r="3.7" fill="#f6b060" opacity="0.98"/>
<circle cx="218.1" cy="393.8" r="5.1" fill="#ffc890" opacity="0.88"/>
<circle cx="262.4" cy="349.9" r="4.2" fill="#d06a50" opacity="0.86"/>
<circle cx="224.4" cy="390.6" r="4.2" fill="#e87a8a" opacity="0.79"/>
<circle cx="184.2" cy="339.7" r="4.5" fill="#ffe6c8" opacity="0.78"/>
<circle cx="197.8" cy="457.2" r="5.1" fill="#f0b0e0" opacity="0.97"/>
<circle cx="239.2" cy="395.7" r="4.3" fill="#b890f0" opacity="0.85"/>
<circle cx="236.8" cy="376.9" r="4.0" fill="#ffe6c8" opacity="0.82"/>
<circle cx="239.6" cy="431.0" r="2.6" fill="#ffc890" opacity="0.84"/>
<circle cx="209.1" cy="380.2" r="1.9" fill="#ffe6c8" opacity="0.77"/>
<circle cx="228.3" cy="377.6" r="3.0" fill="#f4a46a" opacity="0.86"/>
<circle cx="226.5" cy="351.8" r="5.3" fill="#d06a50" opacity="0.89"/>
<circle cx="228.3" cy="373.5" r="1.9" fill="#7a8cf0" opacity="0.78"/>
<circle cx="226.6" cy="401.9" r="3.0" fill="#d06a50" opacity="0.81"/>
<circle cx="193.5" cy="377.3" r="4.8" fill="#8fb4ff" opacity="0.96"/>
<circle cx="226.0" cy="377.5" r="4.6" fill="#f4a46a" opacity="0.95"/>
<circle cx="221.7" cy="385.6" r="3.1" fill="#f6b060" opacity="0.82"/>
<circle cx="251.4" cy="395.7" r="5.2" fill="#f0b0e0" opacity="0.81"/>
<circle cx="242.0" cy="370.2" r="5.4" fill="#ffd7b0" opacity="0.99"/>
<circle cx="213.6" cy="393.7" r="3.5" fill="#e87a8a" opacity="0.86"/>
<circle cx="223.5" cy="383.8" r="5.0" fill="#d06a50" opacity="0.86"/>
<circle cx="212.6" cy="393.1" r="2.8" fill="#c98af0" opacity="0.77"/>
<circle cx="256.6" cy="367.6" r="1.9" fill="#c98af0" opacity="0.95"/>
<circle cx="221.8" cy="381.2" r="4.5" fill="#8fb4ff" opacity="0.94"/>
<circle cx="250.8" cy="377.9" r="5.1" fill="#b890f0" opacity="0.90"/>
<circle cx="250.9" cy="385.8" r="4.8" fill="#f6b060" opacity="0.93"/>
<circle cx="196.1" cy="366.6" r="2.7" fill="#ffd7b0" opacity="0.91"/>
<circle cx="206.2" cy="379.7" r="2.2" fill="#b890f0" opacity="0.79"/>
<circle cx="197.8" cy="403.6" r="5.0" fill="#b890f0" opacity="0.86"/>
<circle cx="238.7" cy="391.8" r="4.6" fill="#7a8cf0" opacity="0.87"/>
<circle cx="236.3" cy="389.2" r="3.0" fill="#ffd7b0" opacity="0.87"/>
<circle cx="228.7" cy="375.4" r="3.8" fill="#ffe6c8" opacity="0.85"/>
<circle cx="212.3" cy="392.0" r="4.2" fill="#c98af0" opacity="0.93"/>
<circle cx="268.0" cy="373.6" r="4.4" fill="#f0b0e0" opacity="0.79"/>
<circle cx="226.8" cy="381.7" r="3.4" fill="#e87a8a" opacity="0.75"/>
<circle cx="230.6" cy="407.6" r="1.8" fill="#ffc890" opacity="0.87"/>
<circle cx="244.0" cy="387.9" r="5.0" fill="#ffe6c8" opacity="0.98"/>
<circle cx="241.5" cy="368.8" r="3.5" fill="#f6b060" opacity="0.98"/>
<circle cx="271.9" cy="385.4" r="2.5" fill="#ffd7b0" opacity="0.85"/>
<circle cx="237.9" cy="391.7" r="2.5" fill="#7a8cf0" opacity="0.89"/>
<circle cx="233.4" cy="380.1" r="4.3" fill="#7a8cf0" opacity="0.94"/>
<circle cx="206.1" cy="379.3" r="2.4" fill="#f6b060" opacity="0.92"/>
<circle cx="201.8" cy="329.0" r="2.7" fill="#f6b060" opacity="0.87"/>
<circle cx="235.3" cy="376.2" r="3.6" fill="#f0b0e0" opacity="0.77"/>
<circle cx="223.0" cy="392.9" r="5.4" fill="#c98af0" opacity="0.75"/>
<circle cx="221.1" cy="383.8" r="4.5" fill="#f6b060" opacity="0.76"/>
<circle cx="249.2" cy="395.4" r="5.3" fill="#f4a46a" opacity="0.76"/>
<circle cx="228.1" cy="385.2" r="2.6" fill="#f6b060" opacity="0.76"/>
<circle cx="122.7" cy="361.0" r="3.9" fill="#f0b0e0" opacity="0.82"/>
<circle cx="265.8" cy="423.7" r="2.2" fill="#b890f0" opacity="0.77"/>
<circle cx="227.5" cy="388.4" r="3.7" fill="#d06a50" opacity="0.88"/>
<circle cx="239.5" cy="392.6" r="5.1" fill="#f4a46a" opacity="0.77"/>
<circle cx="314.2" cy="395.0" r="4.1" fill="#ffc890" opacity="0.88"/>
<circle cx="172.2" cy="354.6" r="2.1" fill="#f4a46a" opacity="0.92"/>
<circle cx="187.5" cy="364.8" r="3.4" fill="#f6b060" opacity="0.75"/>
<circle cx="219.3" cy="330.3" r="4.7" fill="#7a8cf0" opacity="0.80"/>
<circle cx="218.6" cy="376.1" r="4.4" fill="#f6b060" opacity="0.86"/>
<circle cx="265.9" cy="407.0" r="3.1" fill="#ffc890" opacity="0.77"/>
<circle cx="222.6" cy="389.3" r="5.0" fill="#ffc890" opacity="0.77"/>
<circle cx="219.9" cy="392.7" r="3.6" fill="#d06a50" opacity="0.99"/>
<circle cx="226.2" cy="361.6" r="1.8" fill="#ffc890" opacity="0.76"/>
<circle cx="220.6" cy="382.0" r="3.2" fill="#f0b0e0" opacity="0.98"/>
<circle cx="193.8" cy="375.0" r="2.6" fill="#b890f0" opacity="0.94"/>
<circle cx="235.9" cy="388.8" r="4.4" fill="#f6b060" opacity="0.92"/>
<circle cx="223.3" cy="382.9" r="3.4" fill="#f4a46a" opacity="0.79"/>
<circle cx="284.8" cy="369.1" r="2.7" fill="#8fb4ff" opacity="0.96"/>
<circle cx="247.3" cy="386.9" r="3.2" fill="#e87a8a" opacity="0.86"/>
<circle cx="282.0" cy="379.4" r="4.5" fill="#ffd7b0" opacity="0.82"/>
<circle cx="222.1" cy="439.2" r="3.3" fill="#f4a46a" opacity="0.84"/>
<circle cx="171.5" cy="375.0" r="1.8" fill="#c98af0" opacity="0.97"/>
<circle cx="240.3" cy="344.0" r="3.7" fill="#ffc890" opacity="0.76"/>
<circle cx="244.1" cy="365.2" r="2.0" fill="#ffc890" opacity="0.99"/>
<circle cx="232.0" cy="394.1" r="3.7" fill="#f6b060" opacity="0.92"/>
<circle cx="224.9" cy="442.0" r="3.7" fill="#f6b060" opacity="0.77"/>
<circle cx="234.4" cy="416.3" r="2.8" fill="#f4a46a" opacity="0.93"/>
<circle cx="147.4" cy="405.6" r="4.0" fill="#d06a50" opacity="0.92"/>
<circle cx="194.5" cy="339.8" r="4.5" fill="#f0b0e0" opacity="0.81"/>
<circle cx="218.9" cy="427.6" r="2.6" fill="#8fb4ff" opacity="0.90"/>
<circle cx="215.2" cy="377.6" r="4.5" fill="#e87a8a" opacity="0.91"/>
<circle cx="211.2" cy="379.2" r="2.0" fill="#ffc890" opacity="0.88"/>
<circle cx="254.9" cy="394.3" r="2.1" fill="#ffe6c8" opacity="0.78"/>
<circle cx="153.3" cy="385.7" r="2.8" fill="#7a8cf0" opacity="0.79"/>
<circle cx="268.0" cy="269.0" r="3.4" fill="#e9e4ff"/>
<circle cx="153.0" cy="350.0" r="3.0" fill="#fff"/>
<circle cx="345.0" cy="342.0" r="3.5" fill="#7fb0c0"/>
<circle cx="160.0" cy="545.0" r="3.4" fill="#c8e0a0"/>
<circle cx="120.0" cy="640.0" r="4.0" fill="#ff9a78"/>
<circle cx="176.0" cy="520.0" r="3.0" fill="#ffd0a0"/>
<circle cx="365.0" cy="285.0" r="3.2" fill="#ffd890"/>
<circle cx="357.0" cy="294.0" r="2.6" fill="#f0a0a0"/>
<circle cx="150.0" cy="468.0" r="3.0" fill="#a04040"/>
<circle cx="163.0" cy="458.0" r="3.0" fill="#c06060"/>
<circle cx="140.0" cy="478.0" r="3.0" fill="#e07070"/>
<circle cx="296.0" cy="368.0" r="3.0" fill="#404858"/>
<circle cx="312.0" cy="390.0" r="3.0" fill="#9ab0c0"/>
<path d="M262 392 L345 352" stroke="#c8d4e8" stroke-width="1" opacity=".8"/>
</g>
<path d="M-1.9 110.9 L139.0 98.7" stroke="#49c8ff" stroke-width="20" opacity=".38" stroke-linecap="round" filter="url(#bl3)"/>
<path d="M-1.9 105.8 L4.3 106.9 L10.5 107.4 L16.7 107.2 L22.9 106.5 L29.1 105.3 L35.2 103.7 L41.4 101.9 L47.6 100.1 L53.8 98.5 L60.0 97.3 L66.2 96.4 L72.4 96.1 L78.5 96.2 L84.7 96.8 L90.9 97.6 L97.1 98.5 L103.3 99.4 L109.5 100.2 L115.7 100.7 L121.9 100.9 L128.0 100.8 L134.2 100.2 L140.4 99.5 L146.6 98.5 L152.8 97.5 L159.0 96.5" fill="none" stroke="#a8f4ff" stroke-width="1.7" opacity="0.73"/>
<path d="M-1.9 124.3 L4.3 125.2 L10.5 125.2 L16.7 124.3 L22.9 122.6 L29.1 120.1 L35.2 117.2 L41.4 114.0 L47.6 110.9 L53.8 108.1 L60.0 105.9 L66.2 104.3 L72.4 103.4 L78.5 103.2 L84.7 103.6 L90.9 104.3 L97.1 105.2 L103.3 106.1 L109.5 106.6 L115.7 106.8 L121.9 106.4 L128.0 105.6 L134.2 104.2 L140.4 102.5 L146.6 100.5 L152.8 98.5 L159.0 96.5" fill="none" stroke="#7fe8ff" stroke-width="1.7" opacity="0.71"/>
<path d="M-1.9 101.3 L4.3 102.4 L10.5 103.7 L16.7 105.0 L22.9 106.1 L29.1 107.0 L35.2 107.3 L41.4 107.1 L47.6 106.5 L53.8 105.4 L60.0 104.0 L66.2 102.4 L72.4 100.9 L78.5 99.4 L84.7 98.3 L90.9 97.5 L97.1 97.1 L103.3 97.0 L109.5 97.3 L115.7 97.8 L121.9 98.5 L128.0 99.1 L134.2 99.6 L140.4 99.9 L146.6 99.9 L152.8 99.7 L159.0 99.2" fill="none" stroke="#c8f6ff" stroke-width="1.0" opacity="0.55"/>
<path d="M-1.9 107.6 L4.3 109.0 L10.5 109.7 L16.7 109.7 L22.9 108.9 L29.1 107.6 L35.2 105.8 L41.4 103.8 L47.6 101.8 L53.8 100.0 L60.0 98.7 L66.2 97.8 L72.4 97.6 L78.5 97.9 L84.7 98.7 L90.9 99.8 L97.1 101.1 L103.3 102.3 L109.5 103.4 L115.7 104.1 L121.9 104.5 L128.0 104.4 L134.2 103.9 L140.4 103.1 L146.6 102.1 L152.8 101.0 L159.0 99.9" fill="none" stroke="#4fc8ff" stroke-width="1.0" opacity="0.62"/>
<path d="M-1.9 127.3 L4.3 125.4 L10.5 122.9 L16.7 119.9 L22.9 116.9 L29.1 113.9 L35.2 111.3 L41.4 109.3 L47.6 107.9 L53.8 107.2 L60.0 107.1 L66.2 107.5 L72.4 108.2 L78.5 109.0 L84.7 109.7 L90.9 110.1 L97.1 110.1 L103.3 109.6 L109.5 108.6 L115.7 107.2 L121.9 105.3 L128.0 103.3 L134.2 101.2 L140.4 99.2 L146.6 97.4 L152.8 96.0 L159.0 94.9" fill="none" stroke="#c8f6ff" stroke-width="0.9" opacity="0.78"/>
<path d="M-1.9 112.6 L4.3 113.9 L10.5 114.2 L16.7 113.5 L22.9 112.0 L29.1 109.8 L35.2 107.2 L41.4 104.6 L47.6 102.1 L53.8 100.2 L60.0 99.0 L66.2 98.5 L72.4 98.8 L78.5 99.7 L84.7 101.2 L90.9 102.9 L97.1 104.7 L103.3 106.3 L109.5 107.6 L115.7 108.3 L121.9 108.4 L128.0 108.0 L134.2 107.1 L140.4 105.8 L146.6 104.4 L152.8 103.0 L159.0 101.7" fill="none" stroke="#4fc8ff" stroke-width="1.7" opacity="0.70"/>
<path d="M-1.9 112.8 L4.3 113.5 L10.5 114.4 L16.7 115.3 L22.9 116.0 L29.1 116.3 L35.2 116.2 L41.4 115.5 L47.6 114.3 L53.8 112.7 L60.0 110.7 L66.2 108.6 L72.4 106.5 L78.5 104.6 L84.7 102.9 L90.9 101.7 L97.1 100.8 L103.3 100.3 L109.5 100.2 L115.7 100.3 L121.9 100.4 L128.0 100.6 L134.2 100.6 L140.4 100.4 L146.6 100.0 L152.8 99.2 L159.0 98.2" fill="none" stroke="#c8f6ff" stroke-width="1.8" opacity="0.82"/>
<path d="M-1.9 112.5 L4.3 112.4 L10.5 111.4 L16.7 109.5 L22.9 107.1 L29.1 104.4 L35.2 101.7 L41.4 99.4 L47.6 97.6 L53.8 96.7 L60.0 96.5 L66.2 97.1 L72.4 98.3 L78.5 100.0 L84.7 101.9 L90.9 103.8 L97.1 105.4 L103.3 106.5 L109.5 107.0 L115.7 106.9 L121.9 106.3 L128.0 105.2 L134.2 103.8 L140.4 102.3 L146.6 100.8 L152.8 99.6 L159.0 98.7" fill="none" stroke="#7fe8ff" stroke-width="1.0" opacity="0.64"/>
<path d="M-1.9 112.4 L4.3 113.5 L10.5 114.0 L16.7 113.6 L22.9 112.5 L29.1 110.8 L35.2 108.6 L41.4 106.2 L47.6 103.9 L53.8 101.8 L60.0 100.1 L66.2 99.0 L72.4 98.4 L78.5 98.5 L84.7 99.1 L90.9 100.0 L97.1 101.0 L103.3 102.1 L109.5 102.9 L115.7 103.4 L121.9 103.4 L128.0 103.1 L134.2 102.3 L140.4 101.1 L146.6 99.8 L152.8 98.3 L159.0 96.9" fill="none" stroke="#e0fbff" stroke-width="0.8" opacity="0.66"/>
<path d="M-1.9 110.2 L4.3 108.2 L10.5 106.2 L16.7 104.5 L22.9 103.1 L29.1 102.3 L35.2 101.9 L41.4 101.9 L47.6 102.4 L53.8 103.1 L60.0 104.0 L66.2 104.7 L72.4 105.3 L78.5 105.6 L84.7 105.6 L90.9 105.1 L97.1 104.3 L103.3 103.2 L109.5 102.0 L115.7 100.6 L121.9 99.3 L128.0 98.2 L134.2 97.2 L140.4 96.6 L146.6 96.2 L152.8 96.0 L159.0 96.1" fill="none" stroke="#e0fbff" stroke-width="0.9" opacity="0.73"/>
<path d="M-1.9 117.1 L4.3 115.2 L10.5 113.2 L16.7 111.2 L22.9 109.5 L29.1 108.2 L35.2 107.2 L41.4 106.6 L47.6 106.3 L53.8 106.3 L60.0 106.5 L66.2 106.7 L72.4 106.8 L78.5 106.7 L84.7 106.4 L90.9 105.7 L97.1 104.8 L103.3 103.6 L109.5 102.2 L115.7 100.8 L121.9 99.3 L128.0 97.9 L134.2 96.6 L140.4 95.5 L146.6 94.6 L152.8 93.9 L159.0 93.4" fill="none" stroke="#e0fbff" stroke-width="1.9" opacity="0.92"/>
<path d="M-1.9 101.2 L4.3 99.5 L10.5 98.2 L16.7 97.3 L22.9 96.9 L29.1 97.0 L35.2 97.5 L41.4 98.4 L47.6 99.4 L53.8 100.4 L60.0 101.3 L66.2 101.9 L72.4 102.2 L78.5 102.1 L84.7 101.6 L90.9 100.7 L97.1 99.7 L103.3 98.5 L109.5 97.3 L115.7 96.2 L121.9 95.3 L128.0 94.7 L134.2 94.4 L140.4 94.3 L146.6 94.5 L152.8 94.8 L159.0 95.2" fill="none" stroke="#e0fbff" stroke-width="1.9" opacity="0.74"/>
<path d="M-1.9 97.4 L4.3 99.4 L10.5 101.7 L16.7 103.8 L22.9 105.5 L29.1 106.7 L35.2 107.1 L41.4 106.8 L47.6 105.7 L53.8 104.1 L60.0 102.1 L66.2 99.9 L72.4 97.8 L78.5 96.0 L84.7 94.7 L90.9 93.9 L97.1 93.7 L103.3 94.1 L109.5 94.9 L115.7 96.0 L121.9 97.1 L128.0 98.2 L134.2 99.1 L140.4 99.6 L146.6 99.7 L152.8 99.4 L159.0 98.7" fill="none" stroke="#c8f6ff" stroke-width="2.0" opacity="0.79"/>
<path d="M-1.9 103.4 L4.3 104.1 L10.5 105.2 L16.7 106.5 L22.9 107.7 L29.1 108.6 L35.2 109.2 L41.4 109.2 L47.6 108.6 L53.8 107.5 L60.0 106.0 L66.2 104.2 L72.4 102.2 L78.5 100.3 L84.7 98.7 L90.9 97.3 L97.1 96.3 L103.3 95.8 L109.5 95.7 L115.7 95.9 L121.9 96.3 L128.0 96.7 L134.2 97.1 L140.4 97.4 L146.6 97.4 L152.8 97.1 L159.0 96.6" fill="none" stroke="#7fe8ff" stroke-width="1.0" opacity="0.65"/>
<path d="M324.1 101.4 L430.3 106.0" stroke="#49c8ff" stroke-width="12" opacity=".32" stroke-linecap="round" filter="url(#bl3)"/>
<path d="M304.1 96.1 L310.4 96.7 L316.7 97.7 L323.0 98.9 L329.3 100.1 L335.6 101.1 L341.9 101.6 L348.3 101.6 L354.6 101.1 L360.9 100.3 L367.2 99.4 L373.5 98.5 L379.8 97.8 L386.1 97.5 L392.4 97.5 L398.7 97.9 L405.1 98.5 L411.4 99.2 L417.7 99.8 L424.0 100.2 L430.3 100.5" fill="none" stroke="#e0fbff" stroke-width="0.9" opacity="0.81"/>
<path d="M304.1 103.4 L310.4 101.9 L316.7 100.5 L323.0 99.6 L329.3 99.2 L335.6 99.3 L341.9 99.9 L348.3 100.8 L354.6 101.7 L360.9 102.5 L367.2 102.9 L373.5 103.0 L379.8 102.6 L386.1 101.8 L392.4 100.9 L398.7 100.0 L405.1 99.2 L411.4 98.6 L417.7 98.4 L424.0 98.4 L430.3 98.7" fill="none" stroke="#4fc8ff" stroke-width="1.4" opacity="0.53"/>
<path d="M304.1 100.4 L310.4 102.5 L316.7 103.9 L323.0 104.6 L329.3 104.4 L335.6 103.6 L341.9 102.4 L348.3 101.1 L354.6 100.1 L360.9 99.5 L367.2 99.7 L373.5 100.4 L379.8 101.6 L386.1 103.1 L392.4 104.7 L398.7 106.0 L405.1 106.9 L411.4 107.3 L417.7 107.3 L424.0 107.0 L430.3 106.5" fill="none" stroke="#7fe8ff" stroke-width="1.3" opacity="0.76"/>
<path d="M304.1 98.0 L310.4 99.2 L316.7 101.1 L323.0 103.3 L329.3 105.5 L335.6 107.4 L341.9 108.6 L348.3 109.0 L354.6 108.7 L360.9 107.9 L367.2 106.8 L373.5 105.8 L379.8 105.1 L386.1 104.9 L392.4 105.3 L398.7 106.2 L405.1 107.5 L411.4 109.0 L417.7 110.3 L424.0 111.4 L430.3 112.1" fill="none" stroke="#a8f4ff" stroke-width="0.9" opacity="0.76"/>
<path d="M304.1 100.3 L310.4 100.0 L316.7 100.8 L323.0 102.4 L329.3 104.6 L335.6 107.0 L341.9 109.0 L348.3 110.4 L354.6 111.0 L360.9 110.8 L367.2 109.9 L373.5 108.6 L379.8 107.3 L386.1 106.2 L392.4 105.6 L398.7 105.6 L405.1 106.2 L411.4 107.3 L417.7 108.7 L424.0 110.0 L430.3 111.1" fill="none" stroke="#4fc8ff" stroke-width="1.3" opacity="0.76"/>
<path d="M304.1 100.0 L310.4 98.2 L316.7 96.6 L323.0 95.4 L329.3 95.0 L335.6 95.4 L341.9 96.6 L348.3 98.4 L354.6 100.5 L360.9 102.4 L367.2 104.0 L373.5 105.0 L379.8 105.3 L386.1 105.0 L392.4 104.3 L398.7 103.5 L405.1 102.7 L411.4 102.3 L417.7 102.3 L424.0 102.8 L430.3 103.7" fill="none" stroke="#e0fbff" stroke-width="0.8" opacity="0.59"/>
<path d="M304.1 94.6 L310.4 93.9 L316.7 94.3 L323.0 95.5 L329.3 97.3 L335.6 99.4 L341.9 101.2 L348.3 102.6 L354.6 103.3 L360.9 103.2 L367.2 102.4 L373.5 101.2 L379.8 99.9 L386.1 98.7 L392.4 97.9 L398.7 97.7 L405.1 98.0 L411.4 98.8 L417.7 99.9 L424.0 101.0 L430.3 102.0" fill="none" stroke="#a8f4ff" stroke-width="1.1" opacity="0.88"/>
<path d="M304.1 94.7 L310.4 95.5 L316.7 96.9 L323.0 98.7 L329.3 100.6 L335.6 102.5 L341.9 104.1 L348.3 105.2 L354.6 106.0 L360.9 106.3 L367.2 106.3 L373.5 106.2 L379.8 106.1 L386.1 106.3 L392.4 106.8 L398.7 107.7 L405.1 108.8 L411.4 110.2 L417.7 111.6 L424.0 112.9 L430.3 114.0" fill="none" stroke="#e0fbff" stroke-width="1.5" opacity="0.65"/>
<path d="M304.1 101.2 L310.4 103.6 L316.7 105.7 L323.0 107.1 L329.3 107.5 L335.6 106.9 L341.9 105.5 L348.3 103.5 L354.6 101.5 L360.9 99.8 L367.2 98.6 L373.5 98.3 L379.8 98.6 L386.1 99.6 L392.4 100.9 L398.7 102.3 L405.1 103.4 L411.4 104.0 L417.7 104.1 L424.0 103.6 L430.3 102.8" fill="none" stroke="#a8f4ff" stroke-width="1.0" opacity="0.83"/>
<path d="M304.1 104.7 L310.4 102.3 L316.7 99.9 L323.0 97.8 L329.3 96.5 L335.6 96.3 L341.9 97.0 L348.3 98.5 L354.6 100.4 L360.9 102.4 L367.2 104.0 L373.5 104.9 L379.8 105.1 L386.1 104.6 L392.4 103.5 L398.7 102.1 L405.1 100.7 L411.4 99.7 L417.7 99.1 L424.0 99.0 L430.3 99.5" fill="none" stroke="#4fc8ff" stroke-width="0.9" opacity="0.51"/>
<defs><pattern id="bubL" width="38" height="97" patternUnits="userSpaceOnUse"><rect width="38" height="97" fill="#2a7fd0"/><circle cx="26.9" cy="55.2" r="2.1" fill="#4a6af0"/><circle cx="31.5" cy="0.0" r="1.9" fill="#7a5ae0"/><circle cx="31.5" cy="97.0" r="1.9" fill="#7a5ae0"/><circle cx="23.1" cy="46.1" r="1.8" fill="#1fa8c8"/><circle cx="5.2" cy="23.3" r="1.1" fill="#1fa8c8"/><circle cx="5.7" cy="13.3" r="1.7" fill="#b0f0f8"/><circle cx="12.2" cy="73.1" r="1.2" fill="#1fa8c8"/><circle cx="6.4" cy="56.8" r="1.6" fill="#1fa8c8"/><circle cx="9.6" cy="55.3" r="1.3" fill="#2a8fe0"/><circle cx="36.4" cy="26.1" r="2.4" fill="#1fa8c8"/><circle cx="-1.6" cy="26.1" r="2.4" fill="#1fa8c8"/><circle cx="3.6" cy="42.3" r="2.2" fill="#35c8e0"/><circle cx="34.4" cy="6.8" r="2.1" fill="#2a8fe0"/><circle cx="33.1" cy="40.7" r="1.7" fill="#1a3a90"/><circle cx="11.4" cy="64.3" r="2.0" fill="#b0f0f8"/><circle cx="4.4" cy="23.6" r="2.0" fill="#b0f0f8"/><circle cx="25.8" cy="35.8" r="1.7" fill="#66d8ff"/><circle cx="7.3" cy="7.4" r="2.3" fill="#b0f0f8"/><circle cx="14.5" cy="83.4" r="2.4" fill="#5a3ad0"/><circle cx="9.0" cy="35.5" r="1.7" fill="#5a3ad0"/><circle cx="31.2" cy="68.0" r="1.0" fill="#5a3ad0"/><circle cx="17.9" cy="65.2" r="2.2" fill="#35c8e0"/><circle cx="16.9" cy="33.0" r="2.1" fill="#5a3ad0"/><circle cx="33.8" cy="45.2" r="1.4" fill="#4a6af0"/><circle cx="37.2" cy="8.6" r="2.5" fill="#66d8ff"/><circle cx="-0.8" cy="8.6" r="2.5" fill="#66d8ff"/><circle cx="15.5" cy="93.3" r="2.3" fill="#4a6af0"/><circle cx="14.1" cy="68.7" r="1.5" fill="#3a48d0"/><circle cx="29.1" cy="12.4" r="1.3" fill="#4a6af0"/><circle cx="33.4" cy="11.0" r="1.7" fill="#30d0c0"/><circle cx="15.4" cy="40.8" r="1.0" fill="#b0f0f8"/><circle cx="17.3" cy="32.2" r="1.8" fill="#8fe8f0"/><circle cx="26.8" cy="42.4" r="1.2" fill="#3a48d0"/><circle cx="26.3" cy="65.6" r="2.1" fill="#1fa8c8"/><circle cx="14.0" cy="93.4" r="2.1" fill="#1a3a90"/><circle cx="20.9" cy="19.8" r="1.3" fill="#b0f0f8"/><circle cx="36.7" cy="19.0" r="2.1" fill="#7a5ae0"/><circle cx="-1.3" cy="19.0" r="2.1" fill="#7a5ae0"/><circle cx="24.7" cy="15.9" r="1.0" fill="#3a48d0"/><circle cx="32.3" cy="84.9" r="1.8" fill="#4a6af0"/><circle cx="34.1" cy="57.8" r="1.6" fill="#66d8ff"/><circle cx="10.4" cy="6.8" r="0.9" fill="#2a8fe0"/><circle cx="3.3" cy="24.1" r="1.2" fill="#2a8fe0"/><circle cx="10.1" cy="69.0" r="2.5" fill="#35c8e0"/><circle cx="0.9" cy="8.0" r="1.0" fill="#4a6af0"/><circle cx="38.9" cy="8.0" r="1.0" fill="#4a6af0"/><circle cx="5.6" cy="32.5" r="1.7" fill="#8fe8f0"/><circle cx="11.1" cy="72.5" r="2.3" fill="#8fe8f0"/><circle cx="2.1" cy="8.1" r="1.2" fill="#59e0e8"/><circle cx="40.1" cy="8.1" r="1.2" fill="#59e0e8"/><circle cx="2.4" cy="5.1" r="2.5" fill="#2a8fe0"/><circle cx="40.4" cy="5.1" r="2.5" fill="#2a8fe0"/><circle cx="30.1" cy="70.7" r="1.4" fill="#3a48d0"/><circle cx="5.4" cy="58.7" r="2.5" fill="#48d0e0"/><circle cx="1.9" cy="14.9" r="2.0" fill="#1fa8c8"/><circle cx="39.9" cy="14.9" r="2.0" fill="#1fa8c8"/><circle cx="11.2" cy="1.6" r="1.4" fill="#59e0e8"/><circle cx="11.2" cy="98.6" r="1.4" fill="#59e0e8"/><circle cx="30.5" cy="9.1" r="1.8" fill="#4a6af0"/><circle cx="30.2" cy="43.9" r="1.6" fill="#1a3a90"/><circle cx="8.8" cy="9.1" r="2.0" fill="#b0f0f8"/><circle cx="16.5" cy="1.3" r="2.4" fill="#4a6af0"/><circle cx="16.5" cy="98.3" r="2.4" fill="#4a6af0"/><circle cx="4.1" cy="61.5" r="1.3" fill="#7a5ae0"/><circle cx="19.0" cy="50.6" r="1.4" fill="#35c8e0"/><circle cx="1.2" cy="70.3" r="1.3" fill="#7a5ae0"/><circle cx="39.2" cy="70.3" r="1.3" fill="#7a5ae0"/><circle cx="8.0" cy="69.6" r="1.6" fill="#4a6af0"/><circle cx="34.3" cy="19.8" r="1.4" fill="#5a3ad0"/><circle cx="34.1" cy="12.7" r="1.0" fill="#3a48d0"/><circle cx="29.3" cy="80.2" r="2.0" fill="#38b8d8"/><circle cx="30.2" cy="30.0" r="1.4" fill="#38b8d8"/><circle cx="11.6" cy="75.1" r="1.4" fill="#7a5ae0"/><circle cx="1.9" cy="49.8" r="1.1" fill="#30d0c0"/><circle cx="39.9" cy="49.8" r="1.1" fill="#30d0c0"/><circle cx="23.9" cy="23.8" r="0.9" fill="#8fe8f0"/><circle cx="4.5" cy="49.2" r="1.7" fill="#8fe8f0"/><circle cx="26.1" cy="46.2" r="1.4" fill="#59e0e8"/><circle cx="4.0" cy="6.8" r="1.5" fill="#3a48d0"/><circle cx="2.5" cy="77.9" r="1.7" fill="#3a48d0"/><circle cx="40.5" cy="77.9" r="1.7" fill="#3a48d0"/><circle cx="12.1" cy="46.3" r="2.0" fill="#48d0e0"/><circle cx="26.8" cy="51.9" r="2.1" fill="#38b8d8"/><circle cx="35.5" cy="60.0" r="1.1" fill="#3a48d0"/><circle cx="-2.5" cy="60.0" r="1.1" fill="#3a48d0"/><circle cx="3.3" cy="89.5" r="1.1" fill="#1a3a90"/><circle cx="37.3" cy="88.2" r="1.1" fill="#3a48d0"/><circle cx="-0.7" cy="88.2" r="1.1" fill="#3a48d0"/><circle cx="26.0" cy="3.4" r="2.0" fill="#1a3a90"/><circle cx="28.5" cy="74.8" r="1.6" fill="#59e0e8"/><circle cx="5.5" cy="67.7" r="2.0" fill="#38b8d8"/><circle cx="1.9" cy="27.9" r="2.1" fill="#2a8fe0"/><circle cx="39.9" cy="27.9" r="2.1" fill="#2a8fe0"/><circle cx="20.1" cy="67.9" r="1.4" fill="#1a3a90"/><circle cx="20.2" cy="80.8" r="1.2" fill="#2a8fe0"/><circle cx="14.7" cy="78.3" r="2.0" fill="#8fe8f0"/><circle cx="4.7" cy="23.6" r="2.5" fill="#59e0e8"/><circle cx="3.5" cy="91.5" r="2.4" fill="#38b8d8"/><circle cx="34.4" cy="45.9" r="2.4" fill="#b0f0f8"/><circle cx="30.8" cy="73.6" r="1.5" fill="#4a6af0"/><circle cx="27.9" cy="12.6" r="1.2" fill="#3a48d0"/><circle cx="4.1" cy="78.9" r="1.4" fill="#4a6af0"/><circle cx="1.1" cy="49.7" r="2.2" fill="#38b8d8"/><circle cx="39.1" cy="49.7" r="2.2" fill="#38b8d8"/><circle cx="5.6" cy="82.9" r="1.4" fill="#2a8fe0"/><circle cx="27.7" cy="82.3" r="2.0" fill="#5a3ad0"/><circle cx="15.9" cy="79.7" r="2.3" fill="#b0f0f8"/><circle cx="13.1" cy="76.4" r="1.3" fill="#35c8e0"/><circle cx="34.2" cy="92.3" r="1.4" fill="#1a3a90"/><circle cx="12.1" cy="85.5" r="2.4" fill="#7a5ae0"/><circle cx="14.2" cy="34.2" r="1.5" fill="#59e0e8"/><circle cx="35.8" cy="1.2" r="2.0" fill="#48d0e0"/><circle cx="-2.2" cy="1.2" r="2.0" fill="#48d0e0"/><circle cx="35.8" cy="98.2" r="2.0" fill="#48d0e0"/><circle cx="24.2" cy="86.1" r="2.1" fill="#4a6af0"/><circle cx="31.0" cy="62.5" r="1.0" fill="#30d0c0"/><circle cx="27.7" cy="73.2" r="2.2" fill="#7a5ae0"/><circle cx="19.2" cy="31.6" r="1.6" fill="#7a5ae0"/><circle cx="5.1" cy="52.3" r="1.4" fill="#1a3a90"/><circle cx="2.1" cy="86.9" r="1.2" fill="#8fe8f0"/><circle cx="40.1" cy="86.9" r="1.2" fill="#8fe8f0"/><circle cx="33.4" cy="13.5" r="2.4" fill="#38b8d8"/><circle cx="33.2" cy="52.6" r="2.4" fill="#48d0e0"/><circle cx="33.1" cy="53.1" r="1.6" fill="#8fe8f0"/><circle cx="17.9" cy="44.8" r="2.1" fill="#1a3a90"/><circle cx="8.1" cy="33.0" r="1.3" fill="#59e0e8"/><circle cx="4.5" cy="86.0" r="2.3" fill="#35c8e0"/><circle cx="8.6" cy="6.9" r="1.0" fill="#38b8d8"/><circle cx="2.0" cy="83.4" r="1.9" fill="#7a5ae0"/><circle cx="40.0" cy="83.4" r="1.9" fill="#7a5ae0"/><circle cx="30.5" cy="92.5" r="1.4" fill="#5a3ad0"/><circle cx="33.7" cy="55.9" r="1.4" fill="#8fe8f0"/><circle cx="27.9" cy="30.2" r="2.3" fill="#b0f0f8"/><circle cx="34.8" cy="58.2" r="2.5" fill="#30d0c0"/><circle cx="19.7" cy="47.0" r="1.6" fill="#30d0c0"/><circle cx="36.3" cy="22.0" r="1.2" fill="#66d8ff"/><circle cx="-1.7" cy="22.0" r="1.2" fill="#66d8ff"/><circle cx="13.8" cy="93.0" r="2.0" fill="#59e0e8"/><circle cx="24.9" cy="55.1" r="1.6" fill="#b0f0f8"/><circle cx="16.4" cy="69.6" r="1.6" fill="#59e0e8"/><circle cx="7.0" cy="28.2" r="1.7" fill="#38b8d8"/><circle cx="13.6" cy="21.6" r="2.1" fill="#48d0e0"/><circle cx="2.2" cy="35.6" r="2.4" fill="#38b8d8"/><circle cx="40.2" cy="35.6" r="2.4" fill="#38b8d8"/><circle cx="16.5" cy="36.9" r="2.0" fill="#30d0c0"/><circle cx="15.8" cy="31.7" r="2.5" fill="#66d8ff"/><circle cx="27.8" cy="18.1" r="1.8" fill="#66d8ff"/><circle cx="0.4" cy="84.5" r="1.9" fill="#1fa8c8"/><circle cx="38.4" cy="84.5" r="1.9" fill="#1fa8c8"/><circle cx="38.0" cy="54.4" r="2.2" fill="#2a8fe0"/><circle cx="-0.0" cy="54.4" r="2.2" fill="#2a8fe0"/><circle cx="0.7" cy="63.0" r="2.3" fill="#59e0e8"/><circle cx="38.7" cy="63.0" r="2.3" fill="#59e0e8"/><circle cx="33.0" cy="35.1" r="2.4" fill="#4a6af0"/><circle cx="19.2" cy="87.4" r="2.3" fill="#38b8d8"/><circle cx="34.2" cy="92.6" r="1.7" fill="#30d0c0"/><circle cx="5.9" cy="20.7" r="1.1" fill="#3a48d0"/><circle cx="30.5" cy="41.1" r="1.9" fill="#7a5ae0"/><circle cx="23.0" cy="22.7" r="1.2" fill="#5a3ad0"/><circle cx="17.8" cy="9.0" r="0.9" fill="#8fe8f0"/><circle cx="34.3" cy="16.0" r="2.2" fill="#66d8ff"/><circle cx="9.7" cy="50.1" r="1.2" fill="#b0f0f8"/><circle cx="6.6" cy="84.6" r="2.5" fill="#38b8d8"/><circle cx="27.4" cy="72.7" r="2.0" fill="#38b8d8"/><circle cx="8.2" cy="81.1" r="1.6" fill="#66d8ff"/><circle cx="2.0" cy="91.6" r="1.6" fill="#59e0e8"/><circle cx="40.0" cy="91.6" r="1.6" fill="#59e0e8"/><circle cx="33.0" cy="87.1" r="1.8" fill="#1fa8c8"/><circle cx="5.4" cy="44.6" r="1.9" fill="#66d8ff"/><circle cx="12.8" cy="74.4" r="1.3" fill="#4a6af0"/><circle cx="8.7" cy="84.3" r="1.5" fill="#1fa8c8"/><circle cx="11.5" cy="15.7" r="1.2" fill="#59e0e8"/><circle cx="5.4" cy="57.2" r="1.1" fill="#7a5ae0"/><circle cx="7.0" cy="46.5" r="1.6" fill="#b0f0f8"/><circle cx="18.5" cy="91.6" r="1.7" fill="#4a6af0"/><circle cx="17.9" cy="49.4" r="1.7" fill="#4a6af0"/><circle cx="2.8" cy="68.0" r="2.4" fill="#1fa8c8"/><circle cx="40.8" cy="68.0" r="2.4" fill="#1fa8c8"/><circle cx="3.8" cy="71.2" r="1.4" fill="#38b8d8"/><circle cx="26.2" cy="38.0" r="1.1" fill="#1a3a90"/><circle cx="31.7" cy="53.1" r="1.0" fill="#48d0e0"/><circle cx="27.7" cy="34.4" r="1.9" fill="#30d0c0"/><circle cx="25.8" cy="92.4" r="1.9" fill="#2a8fe0"/><circle cx="21.1" cy="64.3" r="2.1" fill="#5a3ad0"/><circle cx="5.5" cy="35.5" r="2.3" fill="#48d0e0"/><circle cx="12.4" cy="55.4" r="1.3" fill="#48d0e0"/><circle cx="35.9" cy="53.3" r="1.5" fill="#2a8fe0"/><circle cx="-2.1" cy="53.3" r="1.5" fill="#2a8fe0"/><circle cx="10.9" cy="13.2" r="2.3" fill="#35c8e0"/><circle cx="23.4" cy="78.2" r="1.6" fill="#7a5ae0"/><circle cx="13.8" cy="86.8" r="1.5" fill="#66d8ff"/><circle cx="30.1" cy="31.5" r="2.4" fill="#59e0e8"/><circle cx="12.6" cy="37.6" r="1.9" fill="#48d0e0"/><circle cx="32.6" cy="1.6" r="2.2" fill="#59e0e8"/><circle cx="32.6" cy="98.6" r="2.2" fill="#59e0e8"/><circle cx="13.8" cy="88.6" r="1.8" fill="#7a5ae0"/><circle cx="33.9" cy="27.9" r="1.7" fill="#38b8d8"/><circle cx="14.3" cy="7.3" r="1.2" fill="#38b8d8"/><circle cx="30.6" cy="14.2" r="1.3" fill="#35c8e0"/><circle cx="16.6" cy="11.8" r="2.5" fill="#30d0c0"/><circle cx="34.6" cy="91.9" r="1.8" fill="#30d0c0"/><circle cx="37.0" cy="75.0" r="1.1" fill="#1a3a90"/><circle cx="-1.0" cy="75.0" r="1.1" fill="#1a3a90"/><circle cx="7.3" cy="72.6" r="2.3" fill="#1fa8c8"/><circle cx="16.0" cy="61.1" r="2.0" fill="#2a8fe0"/><circle cx="22.7" cy="94.7" r="1.0" fill="#35c8e0"/><circle cx="22.7" cy="-2.3" r="1.0" fill="#35c8e0"/><circle cx="6.1" cy="3.8" r="1.4" fill="#38b8d8"/><circle cx="23.9" cy="10.9" r="1.2" fill="#2a8fe0"/><circle cx="7.5" cy="34.7" r="2.4" fill="#4a6af0"/><circle cx="13.7" cy="95.0" r="1.6" fill="#1fa8c8"/><circle cx="13.7" cy="-2.0" r="1.6" fill="#1fa8c8"/><circle cx="15.5" cy="43.3" r="1.7" fill="#35c8e0"/><circle cx="37.8" cy="68.5" r="1.2" fill="#2a8fe0"/><circle cx="-0.2" cy="68.5" r="1.2" fill="#2a8fe0"/><circle cx="33.9" cy="77.0" r="1.9" fill="#5a3ad0"/><circle cx="2.2" cy="51.4" r="2.0" fill="#35c8e0"/><circle cx="40.2" cy="51.4" r="2.0" fill="#35c8e0"/><circle cx="29.8" cy="53.1" r="2.3" fill="#35c8e0"/><circle cx="17.2" cy="85.5" r="1.9" fill="#8fe8f0"/><circle cx="25.1" cy="49.6" r="1.1" fill="#35c8e0"/><circle cx="34.8" cy="54.4" r="1.1" fill="#2a8fe0"/><circle cx="26.2" cy="15.2" r="1.9" fill="#66d8ff"/><circle cx="30.5" cy="76.2" r="1.7" fill="#35c8e0"/><circle cx="32.1" cy="35.1" r="2.0" fill="#4a6af0"/><circle cx="21.7" cy="70.7" r="1.6" fill="#3a48d0"/><circle cx="36.3" cy="90.1" r="1.9" fill="#8fe8f0"/><circle cx="-1.7" cy="90.1" r="1.9" fill="#8fe8f0"/><circle cx="34.0" cy="18.5" r="2.5" fill="#4a6af0"/><circle cx="30.1" cy="76.4" r="2.2" fill="#b0f0f8"/><circle cx="26.1" cy="30.9" r="2.1" fill="#7a5ae0"/><circle cx="30.4" cy="32.7" r="1.8" fill="#66d8ff"/><circle cx="18.6" cy="26.7" r="2.4" fill="#59e0e8"/><circle cx="18.7" cy="80.4" r="1.0" fill="#1fa8c8"/><circle cx="28.9" cy="55.6" r="2.4" fill="#b0f0f8"/><circle cx="19.3" cy="68.4" r="0.9" fill="#b0f0f8"/><circle cx="29.5" cy="10.0" r="1.3" fill="#59e0e8"/><circle cx="23.0" cy="42.2" r="2.3" fill="#48d0e0"/><circle cx="9.8" cy="70.8" r="1.9" fill="#59e0e8"/><circle cx="1.4" cy="80.9" r="1.4" fill="#59e0e8"/><circle cx="39.4" cy="80.9" r="1.4" fill="#59e0e8"/><circle cx="24.9" cy="27.0" r="1.5" fill="#30d0c0"/><circle cx="19.3" cy="48.6" r="1.7" fill="#48d0e0"/><circle cx="21.7" cy="78.4" r="2.1" fill="#3a48d0"/><circle cx="24.4" cy="30.8" r="2.0" fill="#38b8d8"/><circle cx="18.0" cy="11.5" r="2.1" fill="#2a8fe0"/><circle cx="30.8" cy="28.6" r="1.9" fill="#1a3a90"/><circle cx="20.6" cy="71.8" r="1.1" fill="#5a3ad0"/><circle cx="32.4" cy="83.2" r="1.3" fill="#66d8ff"/><circle cx="1.3" cy="46.4" r="1.0" fill="#1a3a90"/><circle cx="39.3" cy="46.4" r="1.0" fill="#1a3a90"/><circle cx="30.1" cy="85.7" r="1.2" fill="#b0f0f8"/><circle cx="17.8" cy="69.7" r="2.1" fill="#8fe8f0"/><circle cx="31.9" cy="59.0" r="2.4" fill="#5a3ad0"/><circle cx="31.0" cy="11.6" r="1.2" fill="#66d8ff"/><circle cx="9.9" cy="15.9" r="2.4" fill="#4a6af0"/><circle cx="18.0" cy="76.2" r="1.3" fill="#30d0c0"/><circle cx="2.3" cy="15.6" r="2.5" fill="#7a5ae0"/><circle cx="40.3" cy="15.6" r="2.5" fill="#7a5ae0"/><circle cx="36.9" cy="74.8" r="1.9" fill="#66d8ff"/><circle cx="-1.1" cy="74.8" r="1.9" fill="#66d8ff"/><circle cx="23.7" cy="93.9" r="1.2" fill="#1fa8c8"/><circle cx="34.7" cy="78.1" r="2.0" fill="#38b8d8"/><circle cx="14.6" cy="63.3" r="1.7" fill="#66d8ff"/><circle cx="36.6" cy="89.6" r="1.2" fill="#5a3ad0"/><circle cx="-1.4" cy="89.6" r="1.2" fill="#5a3ad0"/><circle cx="4.5" cy="30.9" r="2.3" fill="#30d0c0"/><circle cx="5.2" cy="45.6" r="1.7" fill="#7a5ae0"/><circle cx="21.4" cy="9.6" r="1.7" fill="#b0f0f8"/><circle cx="12.5" cy="33.3" r="1.1" fill="#1fa8c8"/><circle cx="36.5" cy="95.2" r="1.1" fill="#b0f0f8"/><circle cx="-1.5" cy="95.2" r="1.1" fill="#b0f0f8"/><circle cx="36.5" cy="-1.8" r="1.1" fill="#b0f0f8"/><circle cx="10.7" cy="32.0" r="1.8" fill="#2a8fe0"/><circle cx="11.9" cy="2.8" r="1.2" fill="#59e0e8"/><circle cx="11.9" cy="99.8" r="1.2" fill="#59e0e8"/><circle cx="36.4" cy="44.2" r="1.5" fill="#48d0e0"/><circle cx="-1.6" cy="44.2" r="1.5" fill="#48d0e0"/><circle cx="36.0" cy="66.5" r="1.5" fill="#30d0c0"/><circle cx="-2.0" cy="66.5" r="1.5" fill="#30d0c0"/><circle cx="24.1" cy="52.7" r="2.3" fill="#5a3ad0"/><circle cx="6.6" cy="18.3" r="1.2" fill="#7a5ae0"/><circle cx="36.8" cy="23.7" r="2.5" fill="#59e0e8"/><circle cx="-1.2" cy="23.7" r="2.5" fill="#59e0e8"/><circle cx="16.0" cy="20.3" r="1.0" fill="#66d8ff"/><circle cx="19.3" cy="11.5" r="2.2" fill="#5a3ad0"/><circle cx="4.2" cy="27.8" r="1.1" fill="#4a6af0"/><circle cx="25.8" cy="69.2" r="0.9" fill="#35c8e0"/><circle cx="37.0" cy="8.5" r="1.3" fill="#30d0c0"/><circle cx="-1.0" cy="8.5" r="1.3" fill="#30d0c0"/><circle cx="21.6" cy="0.9" r="1.6" fill="#30d0c0"/><circle cx="21.6" cy="97.9" r="1.6" fill="#30d0c0"/><circle cx="27.0" cy="51.7" r="1.2" fill="#b0f0f8"/><circle cx="7.7" cy="17.4" r="2.2" fill="#59e0e8"/><circle cx="8.0" cy="11.8" r="1.8" fill="#38b8d8"/><circle cx="19.6" cy="31.4" r="2.4" fill="#1fa8c8"/><circle cx="37.7" cy="2.6" r="1.9" fill="#38b8d8"/><circle cx="-0.3" cy="2.6" r="1.9" fill="#38b8d8"/><circle cx="37.7" cy="99.6" r="1.9" fill="#38b8d8"/><circle cx="37.3" cy="10.7" r="2.1" fill="#7a5ae0"/><circle cx="-0.7" cy="10.7" r="2.1" fill="#7a5ae0"/><circle cx="19.5" cy="41.5" r="2.3" fill="#35c8e0"/><circle cx="36.2" cy="96.4" r="2.5" fill="#b0f0f8"/><circle cx="-1.8" cy="96.4" r="2.5" fill="#b0f0f8"/><circle cx="36.2" cy="-0.6" r="2.5" fill="#b0f0f8"/><circle cx="20.2" cy="37.4" r="1.5" fill="#8fe8f0"/><circle cx="20.9" cy="34.8" r="2.3" fill="#7a5ae0"/><circle cx="20.7" cy="15.8" r="1.1" fill="#59e0e8"/><circle cx="22.4" cy="77.7" r="1.2" fill="#66d8ff"/><circle cx="21.6" cy="9.3" r="1.7" fill="#3a48d0"/><circle cx="20.7" cy="1.5" r="1.0" fill="#1fa8c8"/><circle cx="20.7" cy="98.5" r="1.0" fill="#1fa8c8"/><circle cx="5.3" cy="89.8" r="0.9" fill="#30d0c0"/><circle cx="31.3" cy="23.4" r="1.0" fill="#3a48d0"/><circle cx="22.4" cy="41.6" r="1.7" fill="#35c8e0"/></pattern></defs>
<rect x="-2" y="-2" width="40" height="293" fill="url(#bubL)"/>
<rect x="389" y="-2" width="34" height="293" fill="url(#bubL)"/>
<ellipse cx="42.0" cy="44.0" rx="12.0" ry="20.0" fill="#03040f"/>
<ellipse cx="40.0" cy="104.0" rx="7.0" ry="9.0" fill="#03040f"/>
<ellipse cx="46.0" cy="198.0" rx="13.0" ry="20.0" fill="#03040f"/>
<ellipse cx="42.0" cy="256.0" rx="9.0" ry="11.0" fill="#03040f"/>
<ellipse cx="38.0" cy="150.0" rx="4.0" ry="8.0" fill="#03040f"/>
<ellipse cx="386.0" cy="40.0" rx="6.0" ry="14.0" fill="#03040f" opacity=".8"/>
<ellipse cx="387.0" cy="120.0" rx="5.0" ry="12.0" fill="#03040f" opacity=".8"/>
<ellipse cx="386.0" cy="215.0" rx="6.0" ry="18.0" fill="#03040f" opacity=".8"/>
</g>
<text x="295.2" y="44.5" font-family="Liberation Sans, sans-serif" font-weight="bold" font-size="31" fill="#a4d6f4" textLength="52" lengthAdjust="spacingAndGlyphs" filter="url(#bl1)">EQ</text>
<text x="88.2" y="285.1" font-family="Liberation Sans, sans-serif" font-weight="bold" font-size="11.5" fill="#7f86cc" opacity=".9" textLength="108" lengthAdjust="spacingAndGlyphs" filter="url(#bl1)">mental engineering</text>
</g></svg>

<svg id="chrome" width="1209" height="779" viewBox="0 0 1209 779" style="left:0;top:0;" fill="none">
<!-- text box outline and handles -->
<rect x="462.8" y="272.4" width="566.7" height="393.4" stroke="#8c8c8c" stroke-width="1.3"/>
<path d="M746.4 248v20" stroke="#777" stroke-width="1.2"/>
<g fill="#fff" stroke="#686868" stroke-width="1.8">
<circle cx="463" cy="272.2" r="4.9"/><circle cx="746.4" cy="272.2" r="4.9"/><circle cx="1029.5" cy="272.2" r="4.9"/>
<circle cx="463" cy="469.2" r="4.9"/><circle cx="1029.5" cy="469.2" r="4.9"/>
<circle cx="463" cy="665.8" r="4.9"/><circle cx="746.4" cy="665.8" r="4.9"/><circle cx="1029.5" cy="665.8" r="4.9"/>
</g>
<!-- rotation handle -->
<g stroke="#707070" stroke-width="1.4" stroke-linecap="round" stroke-linejoin="round">
<path d="M752.4 245A9.7 9.7 0 1 1 755.9 236.6L752.5 236.6A6.3 6.3 0 1 0 750.25 242.4z" fill="#fff"/>
<path d="M748.2 236.4h13.4l-7.2 7.4-2.6-2.7q1.5-1.7 1.6-3.5h-5.2z" fill="#fff"/>
</g>
<!-- bullet arrows -->
<g fill="#0f1c5a" stroke="#0f1c5a" stroke-width=".9" stroke-linejoin="miter">
<path d="M473.8 284.6l20.6 11.6-20.6 12 6.6-12z"/>
<path d="M478.9 296.2l-4.3-9.8 17.6 9.8z" fill="#fff"/>
<path d="M473.8 378.0l20.6 11.6-20.6 12 6.6-12z"/><path d="M478.9 389.6l-4.3-9.8 17.6 9.8z" fill="#fff"/>
<path d="M473.8 429.8l20.6 11.6-20.6 12 6.6-12z"/><path d="M478.9 441.4l-4.3-9.8 17.6 9.8z" fill="#fff"/>
<path d="M473.8 523.2l20.6 11.6-20.6 12 6.6-12z"/><path d="M478.9 534.8l-4.3-9.8 17.6 9.8z" fill="#fff"/>
</g>
<!-- spelling squiggles -->
<g stroke="#e0564f" stroke-width=".9" fill="none" opacity=".9">
<path d="M499.8 548.9q1 -1.7 2 0q1 1.7 2 0q1 -1.7 2 0q1 1.7 2 0q1 -1.7 2 0q1 1.7 2 0q1 -1.7 2 0q1 1.7 2 0q1 -1.7 2 0q1 1.7 2 0q1 -1.7 2 0q1 1.7 2 0q1 -1.7 2 0q1 1.7 2 0q1 -1.7 2 0q1 1.7 2 0q1 -1.7 2 0q1 1.7 2 0q1 -1.7 2 0q1 1.7 2 0q1 -1.7 2 0q1 1.7 2 0q1 -1.7 2 0q1 1.7 2 0q1 -1.7 2 0q1 1.7 2 0q1 -1.7 2 0q1 1.7 2 0q1 -1.7 2 0q1 1.7 2 0q1 -1.7 2 0q1 1.7 2 0q1 -1.7 2 0q1 1.7 2 0q1 -1.7 2 0q1 1.7 2 0q1 -1.7 2 0q1 1.7 2 0q1 -1.7 2 0q1 1.7 2 0q1 -1.7 2 0q1 1.7 2 0q1 -1.7 2 0q1 1.7 2 0q1 -1.7 2 0q1 1.7 2 0q1 -1.7 2 0q1 1.7 2 0q1 -1.7 2 0q1 1.7 2 0q1 -1.7 2 0q1 1.7 2 0q1 -1.7 2 0q1 1.7 2 0q1 -1.7 2 0q1 1.7 2 0q1 -1.7 2 0q1 1.7 2 0q1 -1.7 2 0q1 1.7 2 0q1 -1.7 2 0q1 1.7 2 0q1 -1.7 2 0q1 1.7 2 0q1 -1.7 2 0q1 1.7 2 0q1 -1.7 2 0q1 1.7 2 0q1 -1.7 2 0q1 1.7 2 0q1 -1.7 2 0q1 1.7 2 0q1 -1.7 2 0q1 1.7 2 0q1 -1.7 2 0q1 1.7 2 0q1 -1.7 2 0q1 1.7 2 0q1 -1.7 2 0q1 1.7 2 0q1 -1.7 2 0q1 1.7 2 0"/>
<path d="M670.6 548.9q1 -1.7 2 0q1 1.7 2 0q1 -1.7 2 0q1 1.7 2 0q1 -1.7 2 0q1 1.7 2 0q1 -1.7 2 0q1 1.7 2 0q1 -1.7 2 0q1 1.7 2 0q1 -1.7 2 0q1 1.7 2 0q1 -1.7 2 0q1 1.7 2 0q1 -1.7 2 0q1 1.7 2 0q1 -1.7 2 0q1 1.7 2 0q1 -1.7 2 0q1 1.7 2 0q1 -1.7 2 0q1 1.7 2 0q1 -1.7 2 0q1 1.7 2 0q1 -1.7 2 0q1 1.7 2 0q1 -1.7 2 0q1 1.7 2 0q1 -1.7 2 0q1 1.7 2 0q1 -1.7 2 0q1 1.7 2 0q1 -1.7 2 0q1 1.7 2 0q1 -1.7 2 0q1 1.7 2 0q1 -1.7 2 0q1 1.7 2 0q1 -1.7 2 0q1 1.7 2 0q1 -1.7 2 0q1 1.7 2 0q1 -1.7 2 0q1 1.7 2 0q1 -1.7 2 0q1 1.7 2 0q1 -1.7 2 0q1 1.7 2 0q1 -1.7 2 0q1 1.7 2 0q1 -1.7 2 0q1 1.7 2 0q1 -1.7 2 0q1 1.7 2 0q1 -1.7 2 0q1 1.7 2 0q1 -1.7 2 0q1 1.7 2 0q1 -1.7 2 0q1 1.7 2 0q1 -1.7 2 0"/>
<path d="M825.0 548.9q1 -1.7 2 0q1 1.7 2 0q1 -1.7 2 0q1 1.7 2 0q1 -1.7 2 0q1 1.7 2 0q1 -1.7 2 0q1 1.7 2 0q1 -1.7 2 0q1 1.7 2 0q1 -1.7 2 0q1 1.7 2 0q1 -1.7 2 0q1 1.7 2 0q1 -1.7 2 0q1 1.7 2 0q1 -1.7 2 0q1 1.7 2 0q1 -1.7 2 0q1 1.7 2 0q1 -1.7 2 0q1 1.7 2 0q1 -1.7 2 0q1 1.7 2 0q1 -1.7 2 0q1 1.7 2 0q1 -1.7 2 0q1 1.7 2 0q1 -1.7 2 0q1 1.7 2 0q1 -1.7 2 0q1 1.7 2 0q1 -1.7 2 0q1 1.7 2 0q1 -1.7 2 0q1 1.7 2 0q1 -1.7 2 0q1 1.7 2 0q1 -1.7 2 0q1 1.7 2 0q1 -1.7 2 0q1 1.7 2 0q1 -1.7 2 0q1 1.7 2 0q1 -1.7 2 0q1 1.7 2 0q1 -1.7 2 0q1 1.7 2 0q1 -1.7 2 0q1 1.7 2 0q1 -1.7 2 0q1 1.7 2 0q1 -1.7 2 0q1 1.7 2 0q1 -1.7 2 0q1 1.7 2 0q1 -1.7 2 0q1 1.7 2 0q1 -1.7 2 0q1 1.7 2 0q1 -1.7 2 0q1 1.7 2 0q1 -1.7 2 0q1 1.7 2 0q1 -1.7 2 0q1 1.7 2 0q1 -1.7 2 0q1 1.7 2 0q1 -1.7 2 0q1 1.7 2 0q1 -1.7 2 0q1 1.7 2 0q1 -1.7 2 0q1 1.7 2 0q1 -1.7 2 0q1 1.7 2 0q1 -1.7 2 0q1 1.7 2 0q1 -1.7 2 0q1 1.7 2 0q1 -1.7 2 0q1 1.7 2 0q1 -1.7 2 0q1 1.7 2 0q1 -1.7 2 0q1 1.7 2 0q1 -1.7 2 0q1 1.7 2 0q1 -1.7 2 0q1 1.7 2 0q1 -1.7 2 0q1 1.7 2 0"/>
<path d="M499.8 590.7q1 -1.7 2 0q1 1.7 2 0q1 -1.7 2 0q1 1.7 2 0q1 -1.7 2 0q1 1.7 2 0q1 -1.7 2 0q1 1.7 2 0q1 -1.7 2 0q1 1.7 2 0q1 -1.7 2 0q1 1.7 2 0q1 -1.7 2 0q1 1.7 2 0q1 -1.7 2 0q1 1.7 2 0q1 -1.7 2 0q1 1.7 2 0q1 -1.7 2 0q1 1.7 2 0q1 -1.7 2 0q1 1.7 2 0q1 -1.7 2 0q1 1.7 2 0q1 -1.7 2 0q1 1.7 2 0q1 -1.7 2 0q1 1.7 2 0q1 -1.7 2 0q1 1.7 2 0q1 -1.7 2 0q1 1.7 2 0q1 -1.7 2 0q1 1.7 2 0q1 -1.7 2 0q1 1.7 2 0q1 -1.7 2 0q1 1.7 2 0q1 -1.7 2 0q1 1.7 2 0q1 -1.7 2 0q1 1.7 2 0q1 -1.7 2 0q1 1.7 2 0q1 -1.7 2 0q1 1.7 2 0q1 -1.7 2 0q1 1.7 2 0q1 -1.7 2 0q1 1.7 2 0q1 -1.7 2 0q1 1.7 2 0q1 -1.7 2 0q1 1.7 2 0q1 -1.7 2 0q1 1.7 2 0q1 -1.7 2 0q1 1.7 2 0q1 -1.7 2 0q1 1.7 2 0q1 -1.7 2 0q1 1.7 2 0q1 -1.7 2 0q1 1.7 2 0q1 -1.7 2 0q1 1.7 2 0q1 -1.7 2 0q1 1.7 2 0q1 -1.7 2 0q1 1.7 2 0q1 -1.7 2 0q1 1.7 2 0q1 -1.7 2 0q1 1.7 2 0q1 -1.7 2 0q1 1.7 2 0q1 -1.7 2 0"/>
<path d="M499.8 632.6q1 -1.7 2 0q1 1.7 2 0q1 -1.7 2 0q1 1.7 2 0q1 -1.7 2 0q1 1.7 2 0q1 -1.7 2 0q1 1.7 2 0q1 -1.7 2 0q1 1.7 2 0q1 -1.7 2 0q1 1.7 2 0q1 -1.7 2 0q1 1.7 2 0q1 -1.7 2 0q1 1.7 2 0q1 -1.7 2 0q1 1.7 2 0q1 -1.7 2 0q1 1.7 2 0q1 -1.7 2 0q1 1.7 2 0q1 -1.7 2 0q1 1.7 2 0q1 -1.7 2 0q1 1.7 2 0q1 -1.7 2 0q1 1.7 2 0q1 -1.7 2 0q1 1.7 2 0q1 -1.7 2 0q1 1.7 2 0q1 -1.7 2 0q1 1.7 2 0q1 -1.7 2 0q1 1.7 2 0q1 -1.7 2 0q1 1.7 2 0q1 -1.7 2 0q1 1.7 2 0q1 -1.7 2 0q1 1.7 2 0q1 -1.7 2 0q1 1.7 2 0q1 -1.7 2 0q1 1.7 2 0q1 -1.7 2 0q1 1.7 2 0q1 -1.7 2 0q1 1.7 2 0q1 -1.7 2 0q1 1.7 2 0q1 -1.7 2 0q1 1.7 2 0q1 -1.7 2 0q1 1.7 2 0q1 -1.7 2 0q1 1.7 2 0q1 -1.7 2 0q1 1.7 2 0q1 -1.7 2 0q1 1.7 2 0q1 -1.7 2 0q1 1.7 2 0q1 -1.7 2 0q1 1.7 2 0q1 -1.7 2 0q1 1.7 2 0q1 -1.7 2 0q1 1.7 2 0q1 -1.7 2 0q1 1.7 2 0q1 -1.7 2 0q1 1.7 2 0q1 -1.7 2 0q1 1.7 2 0q1 -1.7 2 0q1 1.7 2 0q1 -1.7 2 0q1 1.7 2 0q1 -1.7 2 0q1 1.7 2 0q1 -1.7 2 0q1 1.7 2 0"/>
</g>
<!-- move cursor -->
<g stroke="#222" stroke-width="1" stroke-linecap="round" stroke-linejoin="round">
<path d="M454 596.4h10.4M458.9 591.6v9.6"/>
<path d="M457.2 593l1.7-2 1.7 2zM455.4 594.7l-2 1.7 2 1.7zM462.8 594.7l2 1.7-2 1.7zM457.4 600.4l1.5 1.6 1.5-1.6z" fill="#222"/>
<path d="M460.2 597.4v11.4l2.7-2.5 2.1 4.4 1.8-.9-2-4.2h3.7z" fill="#fff"/>
</g>
<!-- vertical scrollbar -->
<path d="M1196 172h13v506q0 4-4 4h-5q-4 0-4-4z" fill="#f5f3f7"/>
<path d="M1199.8 183.4l4.2-6.2 4.2 6.2z" fill="#6a6a70"/>
<rect x="1199.8" y="200.2" width="8.8" height="17.6" rx="4.2" fill="#707076"/>
<path d="M1200.2 674.6l4.1 6 4.1-6z" fill="#6b6b6b"/>
<path d="M1200.2 693.4l4.1-6.4 4.1 6.4zM1200.2 700l4.1-6.4 4.1 6.4z" fill="#6b6b6b"/>
<path d="M1200.2 705l4.1 6.4 4.1-6.4zM1200.2 711.2l4.1 6.4 4.1-6.4z" fill="#6b6b6b"/>
</svg>
<div id="botbar"></div>
<div id="botstrip"><div class="abs" style="left:840px;top:0;width:41px;height:4px;background:#e1e1e6;"></div></div>

</div><!-- /ppt -->
<div id="green"></div>
<div id="zoom"><div id="zgut"></div>
<div class="abs" style="left:4px;top:353px;width:5px;height:50px;border-radius:3px;background:#c4c4c4;"></div>
<div class="abs" style="left:39px;top:297px;width:292px;height:164.5px;background:#1b1b1b;"></div>
<div class="abs" style="left:44.3px;top:426.8px;width:211px;height:30px;border-radius:6px;background:#0d0d0d;"></div>
<svg width="292" height="164" viewBox="0 0 292 164" style="left:39px;top:132.3px;">
<defs>
<clipPath id="c1"><rect x="0" y="0" width="292" height="164"/></clipPath>
<filter id="g4" x="-20%" y="-20%" width="140%" height="140%"><feGaussianBlur stdDeviation="4"/></filter>
<filter id="g2" x="-20%" y="-20%" width="140%" height="140%"><feGaussianBlur stdDeviation="1.8"/></filter>
<filter id="g1" x="-10%" y="-10%" width="120%" height="120%"><feGaussianBlur stdDeviation="0.9"/></filter>
<filter id="g05" x="-10%" y="-10%" width="120%" height="120%"><feGaussianBlur stdDeviation="0.45"/></filter>
<linearGradient id="t1bg" x1="0" y1="0" x2="1" y2="1"><stop offset="0" stop-color="#f7fbe8"/><stop offset=".35" stop-color="#d9ecae"/><stop offset=".7" stop-color="#cfe6a4"/><stop offset="1" stop-color="#e4f0c8"/></linearGradient>
</defs>
<g clip-path="url(#c1)">
<rect width="292" height="164" fill="#dcebb8"/>
<ellipse cx="146" cy="8" rx="160" ry="16" fill="#f8fbf0" opacity="0.95" filter="url(#g4)"/>
<ellipse cx="30" cy="40" rx="34" ry="30" fill="#f4f9e6" opacity="0.90" filter="url(#g4)"/>
<ellipse cx="150" cy="40" rx="26" ry="30" fill="#f1f7df" opacity="0.85" filter="url(#g4)"/>
<ellipse cx="222" cy="52" rx="34" ry="44" fill="#f3f8e4" opacity="0.90" filter="url(#g4)"/>
<ellipse cx="262" cy="108" rx="26" ry="34" fill="#f8fbf4" opacity="0.95" filter="url(#g4)"/>
<ellipse cx="20" cy="100" rx="26" ry="46" fill="#c4dc8a" opacity="0.90" filter="url(#g4)"/>
<ellipse cx="78" cy="120" rx="40" ry="40" fill="#b4d476" opacity="0.90" filter="url(#g4)"/>
<ellipse cx="120" cy="70" rx="14" ry="40" fill="#d4e6a4" opacity="0.80" filter="url(#g4)"/>
<ellipse cx="230" cy="130" rx="30" ry="30" fill="#c8e094" opacity="0.80" filter="url(#g4)"/>
<ellipse cx="285" cy="70" rx="14" ry="70" fill="#b8d87c" opacity="0.80" filter="url(#g4)"/>
<ellipse cx="60" cy="60" rx="18" ry="40" fill="#cfe4a0" opacity="0.70" filter="url(#g4)"/>
<ellipse cx="200" cy="20" rx="20" ry="14" fill="#e6f0c8" opacity="0.70" filter="url(#g4)"/>
<path d="M36 140 Q60 70 93 2" fill="none" stroke="#6cb62c" stroke-width="10" stroke-linecap="round" opacity="0.95" filter="url(#g2)"/>
<path d="M66 150 Q80 110 84 70" fill="none" stroke="#7abc38" stroke-width="9" stroke-linecap="round" opacity="0.80" filter="url(#g2)"/>
<path d="M150 2 Q140 20 128 44" fill="none" stroke="#8cc44a" stroke-width="6" stroke-linecap="round" opacity="0.70" filter="url(#g2)"/>
<path d="M4 150 Q8 90 26 30" fill="none" stroke="#8cc648" stroke-width="9" stroke-linecap="round" opacity="0.80" filter="url(#g2)"/>
<path d="M48 150 Q54 100 50 40" fill="none" stroke="#a4d060" stroke-width="6" stroke-linecap="round" opacity="0.65" filter="url(#g2)"/>
<path d="M253 2 Q252 50 247 92" fill="none" stroke="#74b834" stroke-width="7" stroke-linecap="round" opacity="0.90" filter="url(#g2)"/>
<path d="M280 16 Q286 80 289 150" fill="none" stroke="#78b63a" stroke-width="7" stroke-linecap="round" opacity="0.85" filter="url(#g2)"/>
<path d="M200 10 Q222 50 240 90" fill="none" stroke="#a8d468" stroke-width="5" stroke-linecap="round" opacity="0.60" filter="url(#g2)"/>
<path d="M226 160 Q238 120 262 70" fill="none" stroke="#9ccc58" stroke-width="6" stroke-linecap="round" opacity="0.60" filter="url(#g2)"/>
<path d="M118 60 Q122 100 120 130" fill="none" stroke="#8cc24a" stroke-width="7" stroke-linecap="round" opacity="0.60" filter="url(#g2)"/>
<path d="M101 3 Q112 40 124 128" fill="none" stroke="#3f8a1e" stroke-width="4.5" stroke-linecap="round" opacity=".9" filter="url(#g1)"/>
<path d="M59 63 Q88 92 112 132" fill="none" stroke="#2f7a16" stroke-width="5.0" stroke-linecap="round" opacity=".9" filter="url(#g1)"/>
<path d="M58 82 Q80 112 96 140" fill="none" stroke="#3a841a" stroke-width="3.5" stroke-linecap="round" opacity=".9" filter="url(#g1)"/>
<path d="M112 74 Q118 100 126 126" fill="none" stroke="#4a9424" stroke-width="3.5" stroke-linecap="round" opacity=".9" filter="url(#g1)"/>
<path d="M210 120 Q226 98 237 75" fill="none" stroke="#357f18" stroke-width="6.0" stroke-linecap="round" opacity=".9" filter="url(#g1)"/>
<path d="M76 60 Q84 90 92 112" fill="none" stroke="#58a02c" stroke-width="3.0" stroke-linecap="round" opacity=".9" filter="url(#g1)"/>
<path d="M232 128 Q240 120 250 104" fill="none" stroke="#4a9424" stroke-width="3.0" stroke-linecap="round" opacity=".9" filter="url(#g1)"/>
<circle cx="88" cy="44" r="1.6" fill="#f4fbe8" opacity=".9"/>
<circle cx="87" cy="56" r="1.6" fill="#f4fbe8" opacity=".9"/>
<circle cx="90" cy="20" r="1.6" fill="#f4fbe8" opacity=".9"/>
<circle cx="70" cy="36" r="1.6" fill="#f4fbe8" opacity=".9"/>
<circle cx="116" cy="52" r="1.6" fill="#f4fbe8" opacity=".9"/>
<circle cx="230" cy="78" r="1.6" fill="#f4fbe8" opacity=".9"/>
<circle cx="208" cy="100" r="1.6" fill="#f4fbe8" opacity=".9"/>
<g filter="url(#g1)">
<path d="M90 170 Q100 140 132 122 L136 112 Q150 104 196 104 L202 112 Q232 128 240 146 L252 170z" fill="#ee0f1f"/>
<path d="M134 116 Q146 134 166 134 Q190 130 200 108 Q206 120 198 134 Q178 152 150 146 Q134 138 134 116z" fill="#d80c1a"/>
<path d="M112 150 Q124 132 140 128 M214 124 Q228 134 236 150" stroke="#c40a16" stroke-width="3" fill="none" opacity=".6"/>
<path d="M131 62 Q128 98 140 112 Q152 126 164 126 Q180 123 189 108 Q198 90 196 60 Q164 38 131 62z" fill="#e8846c"/>
<ellipse cx="163" cy="62" rx="31" ry="20" fill="#ec8c72"/>
<path d="M131 70 Q129 96 140 112 Q136 92 137 72z" fill="#c8624e" opacity=".7"/>
<path d="M196 70 Q198 92 189 108 Q192 90 191 72z" fill="#c8624e" opacity=".6"/>
<path d="M128 74 Q119 40 146 32 Q176 24 195 42 Q209 58 197 80 Q197 62 185 54 Q160 44 140 54 Q132 60 131 78z" fill="#5e1e18"/>
<path d="M140 54 Q160 42 186 54 Q170 46 140 54z" fill="#7a2c22"/>
<path d="M131 75 h63" stroke="#f4dcd2" stroke-width="1.1" opacity=".95"/>
<ellipse cx="148" cy="76.5" rx="7" ry="2.8" fill="#7a3428" opacity=".7"/><ellipse cx="178" cy="76.5" rx="7" ry="2.8" fill="#7a3428" opacity=".7"/>
<path d="M139 69 q9 -4 16 -1 M170 68 q8 -3 16 1" stroke="#8a3c2e" stroke-width="1.5" fill="none" opacity=".8"/>
<path d="M160 78 q-3 10 0 12 q4 2 8 0" stroke="#c0604c" stroke-width="1.4" fill="none" opacity=".7"/>
<path d="M151 100 q11 -5 22 0 q-11 9 -22 0z" fill="#8a2a28" opacity=".75"/>
<ellipse cx="162" cy="100.4" rx="8" ry="1.9" fill="#f8e4de" opacity=".95"/>
<path d="M142 114 Q163 132 188 108 Q170 120 142 114z" fill="#c05a48" opacity=".8"/>
</g>
</g>
<rect x="1" y="1" width="290" height="162" fill="none" stroke="#c4e37c" stroke-width="2"/>
</svg>
<div class="abs" style="left:44px;top:262px;width:104.7px;height:30px;border-radius:5px;background:rgba(24,30,14,.86);"></div>
<svg width="292" height="164" viewBox="0 0 292 164" style="left:39px;top:462px;">
<defs><clipPath id="c3"><rect x="0" y="0" width="292" height="164"/></clipPath></defs>
<g clip-path="url(#c3)">
<rect width="292" height="164" fill="#f4ecd2"/>
<g filter="url(#g2)">
<path d="M0 0h60l-30 32l-30 20z" fill="#eaa63c"/>
<path d="M0 52l34-22l-8 44l-26 10z" fill="#f0b958"/>
<path d="M40 0h70l-20 14l-36 4z" fill="#f7d9a0"/>
<path d="M118 0h72l-26 17h-28z" fill="#e9a93e"/>
<path d="M190 0h102v26h-70z" fill="#f2cf92"/>
<path d="M232 22l60-2v40l-40-4z" fill="#f6dfb4"/>
<rect x="0" y="84" width="292" height="50" fill="#f8f6ea"/>
<path d="M0 100l20-8v30l-20 6z" fill="#f3cf94"/>
<rect x="0" y="149" width="150" height="16" fill="#c8882c"/>
<rect x="208" y="132.5" width="90" height="34" fill="#e08d2a"/>
</g>
<circle cx="196.0" cy="5.0" r=".9" fill="#b07a30" opacity=".55"/>
<circle cx="198.0" cy="11.0" r=".9" fill="#b07a30" opacity=".45"/>
<circle cx="200.0" cy="5.0" r=".9" fill="#b07a30" opacity=".55"/>
<circle cx="202.0" cy="11.0" r=".9" fill="#b07a30" opacity=".45"/>
<circle cx="204.0" cy="5.0" r=".9" fill="#b07a30" opacity=".55"/>
<circle cx="206.0" cy="11.0" r=".9" fill="#b07a30" opacity=".45"/>
<circle cx="208.0" cy="5.0" r=".9" fill="#b07a30" opacity=".55"/>
<circle cx="210.0" cy="11.0" r=".9" fill="#b07a30" opacity=".45"/>
<circle cx="212.0" cy="5.0" r=".9" fill="#b07a30" opacity=".55"/>
<circle cx="214.0" cy="11.0" r=".9" fill="#b07a30" opacity=".45"/>
<circle cx="216.0" cy="5.0" r=".9" fill="#b07a30" opacity=".55"/>
<circle cx="218.0" cy="11.0" r=".9" fill="#b07a30" opacity=".45"/>
<circle cx="220.0" cy="5.0" r=".9" fill="#b07a30" opacity=".55"/>
<circle cx="222.0" cy="11.0" r=".9" fill="#b07a30" opacity=".45"/>
<circle cx="224.0" cy="5.0" r=".9" fill="#b07a30" opacity=".55"/>
<circle cx="226.0" cy="11.0" r=".9" fill="#b07a30" opacity=".45"/>
<circle cx="228.0" cy="5.0" r=".9" fill="#b07a30" opacity=".55"/>
<circle cx="230.0" cy="11.0" r=".9" fill="#b07a30" opacity=".45"/>
<circle cx="232.0" cy="5.0" r=".9" fill="#b07a30" opacity=".55"/>
<circle cx="234.0" cy="11.0" r=".9" fill="#b07a30" opacity=".45"/>
<circle cx="236.0" cy="5.0" r=".9" fill="#b07a30" opacity=".55"/>
<circle cx="238.0" cy="11.0" r=".9" fill="#b07a30" opacity=".45"/>
<circle cx="240.0" cy="5.0" r=".9" fill="#b07a30" opacity=".55"/>
<circle cx="242.0" cy="11.0" r=".9" fill="#b07a30" opacity=".45"/>
<circle cx="244.0" cy="5.0" r=".9" fill="#b07a30" opacity=".55"/>
<circle cx="246.0" cy="11.0" r=".9" fill="#b07a30" opacity=".45"/>
<circle cx="248.0" cy="5.0" r=".9" fill="#b07a30" opacity=".55"/>
<circle cx="250.0" cy="11.0" r=".9" fill="#b07a30" opacity=".45"/>
<circle cx="252.0" cy="5.0" r=".9" fill="#b07a30" opacity=".55"/>
<circle cx="254.0" cy="11.0" r=".9" fill="#b07a30" opacity=".45"/>
<circle cx="256.0" cy="5.0" r=".9" fill="#b07a30" opacity=".55"/>
<circle cx="258.0" cy="11.0" r=".9" fill="#b07a30" opacity=".45"/>
<circle cx="260.0" cy="5.0" r=".9" fill="#b07a30" opacity=".55"/>
<circle cx="262.0" cy="11.0" r=".9" fill="#b07a30" opacity=".45"/>
<circle cx="264.0" cy="5.0" r=".9" fill="#b07a30" opacity=".55"/>
<circle cx="266.0" cy="11.0" r=".9" fill="#b07a30" opacity=".45"/>
<circle cx="268.0" cy="5.0" r=".9" fill="#b07a30" opacity=".55"/>
<circle cx="270.0" cy="11.0" r=".9" fill="#b07a30" opacity=".45"/>
<circle cx="272.0" cy="5.0" r=".9" fill="#b07a30" opacity=".55"/>
<circle cx="274.0" cy="11.0" r=".9" fill="#b07a30" opacity=".45"/>
<circle cx="276.0" cy="5.0" r=".9" fill="#b07a30" opacity=".55"/>
<circle cx="278.0" cy="11.0" r=".9" fill="#b07a30" opacity=".45"/>
<circle cx="280.0" cy="5.0" r=".9" fill="#b07a30" opacity=".55"/>
<circle cx="282.0" cy="11.0" r=".9" fill="#b07a30" opacity=".45"/>
<circle cx="284.0" cy="5.0" r=".9" fill="#b07a30" opacity=".55"/>
<circle cx="286.0" cy="11.0" r=".9" fill="#b07a30" opacity=".45"/>
<circle cx="288.0" cy="5.0" r=".9" fill="#b07a30" opacity=".55"/>
<circle cx="290.0" cy="11.0" r=".9" fill="#b07a30" opacity=".45"/>
<g filter="url(#g1)">
<circle cx="50.8" cy="58.9" r="30" fill="#f8f0dc" stroke="#2b2a78" stroke-width="2.6"/>
<circle cx="52" cy="55" r="21" fill="none" stroke="#e0a83c" stroke-width="3"/>
<circle cx="49" cy="54" r="13" fill="#d8d8e0" stroke="#2b2a78" stroke-width="2.4" stroke-dasharray="3 2"/>
<circle cx="52" cy="58" r="8" fill="#e8c878"/>
<path d="M36 74l14-8 16 4 8-10" stroke="#2b2a78" stroke-width="1.6" fill="none"/>
<path d="M30 80q20 10 42-2" stroke="#2b2a78" stroke-width="1.4" fill="none"/>
</g>
<g filter="url(#g05)">
<text x="95.8" y="37.8" font-family="Liberation Sans, sans-serif" font-weight="bold" font-size="14.2" fill="#3d3679" textLength="173.7" lengthAdjust="spacingAndGlyphs">БІЛОЦЕРКІВСЬКИЙ ІНСТИТУТ</text>
<text x="95.8" y="50.4" font-family="Liberation Sans, sans-serif" font-weight="bold" font-size="10.0" fill="#3d3679" textLength="173.7" lengthAdjust="spacingAndGlyphs">НЕПЕРЕРВНОЇ ПРОФЕСІЙНОЇ ОСВІТИ</text>
<rect x="95.8" y="56.6" width="174" height="1.1" fill="#6a6a88"/>
<text x="95.8" y="75.4" font-family="Liberation Sans, sans-serif" font-weight="bold" font-size="12.6" fill="#3d3679" textLength="150.5" lengthAdjust="spacingAndGlyphs">BILA TSERKVA INSTITUTE</text>
<text x="95.8" y="88.0" font-family="Liberation Sans, sans-serif" font-weight="bold" font-size="9.8" fill="#3d3679" textLength="151.6" lengthAdjust="spacingAndGlyphs">OF CONTINUOUS PROFESSIONAL</text>
<text x="95.8" y="100.6" font-family="Liberation Sans, sans-serif" font-weight="bold" font-size="9.8" fill="#3d3679" textLength="58.0" lengthAdjust="spacingAndGlyphs">EDUCATION</text>
<text x="236.0" y="145.4" font-family="Liberation Sans, sans-serif" font-weight="bold" font-size="8.6" fill="#f8e8c8" textLength="40.0" lengthAdjust="spacingAndGlyphs">ДАЄ СТАРТ</text>
<text x="240.0" y="158.0" font-family="Liberation Sans, sans-serif" font-weight="bold" font-size="8.6" fill="#f8e8c8" textLength="36.0" lengthAdjust="spacingAndGlyphs">РОЗВИТКУ</text>
</g>
<g filter="url(#g1)">
<path d="M120 170 Q122 142 138 130 L168 122 Q186 126 196 132 Q238 140 260 170z" fill="#26262c"/>
<path d="M140 100 h28 v30 q-14 8 -28 0z" fill="#c08870"/>
<path d="M124 70 Q120 104 134 118 Q146 128 156 128 Q172 124 180 110 Q188 92 186 66z" fill="#dba790"/>
<path d="M124 74 Q122 100 134 118 Q128 96 130 76z" fill="#b8846e" opacity=".8"/>
<path d="M115 82 Q108 38 143 26 Q176 20 188 44 Q196 64 190 86 L186 70 Q176 60 166 70 Q158 62 150 70 Q142 62 134 72 Q128 66 124 76 Q122 86 122 96 Q116 92 115 82z" fill="#27211f"/>
<ellipse cx="140" cy="84" rx="7" ry="2.6" fill="#5a3830" opacity=".7"/><ellipse cx="167" cy="84" rx="7" ry="2.6" fill="#5a3830" opacity=".7"/>
<path d="M146 112 q7 3 14 0" stroke="#a86858" stroke-width="1.8" fill="none" opacity=".75"/>
<path d="M151 90 q-3 10 3 12" stroke="#b07860" stroke-width="1.5" fill="none" opacity=".7"/>
<ellipse cx="158" cy="100" rx="10" ry="5" fill="#ecc0ac" opacity=".5"/>
<rect x="222.0" y="142.0" width="4" height="4" fill="#e8ecf4"/>
<rect x="224.4" y="150.8" width="4" height="4" fill="#e8ecf4"/>
<rect x="226.8" y="159.6" width="4" height="4" fill="#e8ecf4"/>
<rect x="227.6" y="146.4" width="4" height="4" fill="#e8ecf4"/>
<rect x="230.0" y="155.2" width="4" height="4" fill="#e8ecf4"/>
<rect x="230.8" y="142.0" width="4" height="4" fill="#e8ecf4"/>
<rect x="233.2" y="150.8" width="4" height="4" fill="#e8ecf4"/>
<rect x="235.6" y="159.6" width="4" height="4" fill="#e8ecf4"/>
<rect x="236.4" y="146.4" width="4" height="4" fill="#e8ecf4"/>
<rect x="238.8" y="155.2" width="4" height="4" fill="#e8ecf4"/>
<rect x="239.6" y="142.0" width="4" height="4" fill="#e8ecf4"/>
<rect x="242.0" y="150.8" width="4" height="4" fill="#e8ecf4"/>
<rect x="244.4" y="159.6" width="4" height="4" fill="#e8ecf4"/>
<rect x="245.2" y="146.4" width="4" height="4" fill="#e8ecf4"/>
<rect x="247.6" y="155.2" width="4" height="4" fill="#e8ecf4"/>
</g>
</g></svg>
<div class="abs" style="left:43.7px;top:590.6px;width:158.3px;height:29.6px;border-radius:5px;background:rgba(22,20,18,.8);"></div>
<svg width="341" height="779" viewBox="0 0 341 779" style="left:0;top:0;" fill="none" stroke-linecap="round">
<g transform="translate(46.6 433.2)"><rect x="4.3" y="0" width="8.2" height="12.4" rx="4" fill="#e5504f"/><path d="M2.4 8.6q.5 5.6 6 5.8q5.5-.2 6-5.8" stroke="#e5504f" stroke-width="1.7"/><path d="M8.4 14v2.6M4.6 18.6h7.6v-1.4q-3.8-1.6-7.6 0z" fill="#e5504f" stroke="#e5504f" stroke-width="1.2"/><path d="M.2 17.4L16.8 1.2" stroke="#111" stroke-width="4"/><path d="M.2 17.4L16.8 1.2" stroke="#ee5b58" stroke-width="1.7"/></g>
<g transform="translate(46.8 596.0)"><rect x="4.3" y="0" width="8.2" height="12.4" rx="4" fill="#e5504f"/><path d="M2.4 8.6q.5 5.6 6 5.8q5.5-.2 6-5.8" stroke="#e5504f" stroke-width="1.7"/><path d="M8.4 14v2.6M4.6 18.6h7.6v-1.4q-3.8-1.6-7.6 0z" fill="#e5504f" stroke="#e5504f" stroke-width="1.2"/><path d="M.2 17.4L16.8 1.2" stroke="#111" stroke-width="4"/><path d="M.2 17.4L16.8 1.2" stroke="#ee5b58" stroke-width="1.7"/></g>
<path d="M175.4 660.3l9.4 9.4 9.4-9.4" stroke="#fff" stroke-width="2.8" stroke-linejoin="miter"/>
</svg>
</div><!-- /zoom -->

<div id="texts" class="abs" style="left:0;top:0;width:1554px;height:779px;overflow:hidden;">
<span class="t" id="tb1" style="left:-0.60px;top:16.88px;font-size:14.20px;color:#3f3f3f;transform:scaleX(0.9761);transform-origin:0 0;">нструктор</span>
<span class="t" id="tb2" style="left:88.70px;top:16.88px;font-size:14.20px;color:#3f3f3f;transform:scaleX(0.9801);transform-origin:0 0;">Переходи</span>
<span class="t" id="tb3" style="left:176.70px;top:16.88px;font-size:14.20px;color:#3f3f3f;transform:scaleX(0.9814);transform-origin:0 0;">Анімація</span>
<span class="t" id="tb4" style="left:260.40px;top:16.88px;font-size:14.20px;color:#3f3f3f;transform:scaleX(0.9618);transform-origin:0 0;">Показ слайдів</span>
<span class="t" id="tb5" style="left:374.80px;top:16.88px;font-size:14.20px;color:#3f3f3f;transform:scaleX(0.9645);transform-origin:0 0;">Записати</span>
<span class="t" id="tb6" style="left:457.40px;top:16.88px;font-size:14.20px;color:#3f3f3f;transform:scaleX(0.9775);transform-origin:0 0;">Рецензування</span>
<span class="t" id="tb7" style="left:571.20px;top:16.88px;font-size:14.20px;color:#3f3f3f;transform:scaleX(0.9649);transform-origin:0 0;">Подання</span>
<span class="t" id="tb8" style="left:652.50px;top:16.88px;font-size:14.20px;color:#3f3f3f;transform:scaleX(0.9658);transform-origin:0 0;">Довідка</span>
<span class="t" id="tb9" style="left:729.50px;top:16.88px;font-size:14.20px;color:#c2401e;transform:scaleX(0.9681);transform-origin:0 0;">Формат фігури</span>
<span class="t" id="shr" style="left:1076.80px;top:16.21px;font-size:14.40px;color:#fff1ea;transform:scaleX(0.9599);transform-origin:0 0;-webkit-text-stroke:.38px #fff1ea;">Спільний доступ</span>
<span class="t" id="fsz" style="left:112.40px;top:57.02px;font-size:12.50px;color:#4a4a4a;transform:scaleX(0.8773);transform-origin:0 0;">32</span>
<span class="t" id="gA" style="left:163.40px;top:52.71px;font-size:17.00px;color:#4a4a4a;">A</span>
<span class="t" id="sA" style="left:191.70px;top:55.76px;font-size:13.40px;color:#4a4a4a;">A</span>
<span class="t" id="cA" style="left:217.90px;top:52.84px;font-size:14.60px;color:#4a4a4a;">A</span>
<span class="t" id="shS" style="left:22.80px;top:87.15px;font-size:16.60px;color:#4a4a4a;text-shadow:1px 1px 1px #aaa;transform:scaleX(.78);transform-origin:0 0;">S</span>
<span class="t" id="stk" style="left:47.60px;top:89.33px;font-size:12.60px;color:#555;letter-spacing:-0.308px;">ab</span>
<span class="t" id="av" style="left:72.00px;top:85.49px;font-size:13.60px;color:#4a4a4a;letter-spacing:-0.162px;">AV</span>
<span class="t" id="aa" style="left:115.80px;top:88.15px;font-size:14.00px;color:#4a4a4a;letter-spacing:.5px;">Aa</span>
<span class="t" id="fcA" style="left:206.20px;top:85.75px;font-size:14.00px;color:#4a4a4a;">A</span>
<span class="t" id="rb" style="left:847.10px;top:71.09px;font-size:11.00px;color:#c44fb0;">b</span>
<span class="t" id="rc" style="left:851.20px;top:79.19px;font-size:11.00px;color:#2b9ad3;">c</span>
<span class="t" id="gl1" style="left:61.00px;top:126.22px;font-size:11.20px;color:#3f3f3f;transform:scaleX(0.9236);transform-origin:0 0;">Шрифт</span>
<span class="t" id="gl2" style="left:341.20px;top:126.22px;font-size:11.20px;color:#3f3f3f;transform:scaleX(0.9621);transform-origin:0 0;">Абзац</span>
<span class="t" id="gl3" style="left:618.00px;top:126.22px;font-size:11.20px;color:#3f3f3f;transform:scaleX(0.9599);transform-origin:0 0;">Малювання</span>
<span class="t" id="gl4" style="left:862.40px;top:126.22px;font-size:11.20px;color:#3f3f3f;transform:scaleX(0.9115);transform-origin:0 0;">Редагування</span>
<span class="t" id="gl5" style="left:971.20px;top:126.22px;font-size:11.20px;color:#3f3f3f;transform:scaleX(0.9500);transform-origin:0 0;">Надбудови</span>
<span class="t" id="b1" style="left:494.70px;top:82.93px;font-size:12.60px;color:#3f3f3f;transform:scaleX(0.9900);transform-origin:0 0;">Фігури</span>
<span class="t" id="b2" style="left:538.50px;top:82.93px;font-size:12.60px;color:#3f3f3f;transform:scaleX(0.9835);transform-origin:0 0;">Упорядкувати</span>
<span class="t" id="b3" style="left:625.50px;top:82.93px;font-size:12.60px;color:#3f3f3f;transform:scaleX(0.9386);transform-origin:0 0;">Експрес-</span>
<span class="t" id="b4" style="left:630.00px;top:98.33px;font-size:12.60px;color:#3f3f3f;transform:scaleX(0.9231);transform-origin:0 0;">стилі</span>
<span class="t" id="b5" style="left:704.30px;top:49.03px;font-size:12.60px;color:#3f3f3f;transform:scaleX(0.9530);transform-origin:0 0;">Заливка фігури</span>
<span class="t" id="b6" style="left:704.30px;top:74.93px;font-size:12.60px;color:#3f3f3f;transform:scaleX(0.9717);transform-origin:0 0;">Контур фігури</span>
<span class="t" id="b7" style="left:704.30px;top:101.53px;font-size:12.60px;color:#3f3f3f;transform:scaleX(0.9117);transform-origin:0 0;">Ефекти для фігур</span>
<span class="t" id="b8" style="left:862.00px;top:49.03px;font-size:12.60px;color:#3f3f3f;transform:scaleX(0.9588);transform-origin:0 0;">Знайти</span>
<span class="t" id="b9" style="left:862.00px;top:74.93px;font-size:12.60px;color:#3f3f3f;transform:scaleX(0.9837);transform-origin:0 0;">Замінити</span>
<span class="t" id="b10" style="left:862.40px;top:101.53px;font-size:12.60px;color:#3f3f3f;transform:scaleX(0.9473);transform-origin:0 0;">Виділити</span>
<span class="t" id="b11" style="left:968.60px;top:81.73px;font-size:13.20px;color:#3f3f3f;transform:scaleX(0.9262);transform-origin:0 0;">Надбудови</span>
<span class="t" id="od1" style="left:0.00px;top:151.04px;font-size:12.00px;color:#3a3a3a;transform:scaleX(1.0336);transform-origin:0 0;">тримуйте доступ до цього та інших файлів на кількох пристроях за допомогою OneDrive.</span>
<span class="t" id="od2" style="left:531.00px;top:151.04px;font-size:12.00px;color:#3a3a3a;transform:scaleX(1.0145);transform-origin:0 0;">Відкрити OneDrive</span>
<span class="t" id="nt" style="left:-0.40px;top:752.78px;font-size:11.60px;color:#585858;transform:scaleX(0.9532);transform-origin:0 0;">да</span>
<span class="t" id="s1a" style="left:499.80px;top:283.43px;font-size:30.80px;color:#0f1c5a;font-weight:700;transform:scaleX(0.8945);transform-origin:0 0;">Суспільство</span>
<span class="t" id="s1b" style="left:680.00px;top:278.76px;font-size:35.60px;color:#0f1c5a;font-weight:700;transform:scaleX(1.0449);transform-origin:0 0;-webkit-text-stroke:.9px #0f1c5a;">5.0.:</span>
<span class="t" id="s1c" style="left:765.20px;top:283.43px;font-size:30.80px;color:#0f1c5a;font-weight:700;transform:scaleX(0.9654);transform-origin:0 0;">виклики для</span>
<span class="t" id="s2" style="left:499.80px;top:325.33px;font-size:30.80px;color:#0f1c5a;font-weight:700;transform:scaleX(0.9130);transform-origin:0 0;">освіти</span>
<span class="t" id="s3a" style="left:499.80px;top:377.33px;font-size:30.80px;color:#0f1c5a;font-weight:700;transform:scaleX(0.9755);transform-origin:0 0;">Емоційний інтелект</span>
<span class="t" id="s3b" style="left:791.60px;top:376.31px;font-size:32.00px;color:#0f1c5a;">:</span>
<span class="t" id="s3c" style="left:808.60px;top:377.33px;font-size:30.80px;color:#0f1c5a;font-weight:700;transform:scaleX(0.9779);transform-origin:0 0;">точки зору</span>
<span class="t" id="s4" style="left:499.80px;top:429.23px;font-size:30.80px;color:#0f1c5a;font-weight:700;transform:scaleX(0.9702);transform-origin:0 0;">Ключові складові емоційного</span>
<span class="t" id="s5" style="left:499.80px;top:470.43px;font-size:30.80px;color:#0f1c5a;font-weight:700;transform:scaleX(0.9559);transform-origin:0 0;">інтелекту</span>
<span class="t" id="s6" style="left:499.80px;top:521.83px;font-size:30.80px;color:#0f1c5a;font-weight:700;transform:scaleX(0.9659);transform-origin:0 0;">Емоційний інтелект у професійній</span>
<span class="t" id="s7" style="left:499.80px;top:563.63px;font-size:30.80px;color:#0f1c5a;font-weight:700;transform:scaleX(0.9519);transform-origin:0 0;">діяльності педагога цифрового</span>
<span class="t" id="s8" style="left:499.80px;top:605.53px;font-size:30.80px;color:#0f1c5a;font-weight:700;transform:scaleX(0.8993);transform-origin:0 0;">суспільства</span>
<span class="t" id="z1" style="left:1260.60px;top:269.30px;font-size:15.00px;color:#fff;transform:scaleX(0.9843);transform-origin:0 0;">Nataliia Klokar</span>
<span class="t" id="z2" style="left:1267.70px;top:371.26px;font-size:18.60px;color:#fff;font-weight:700;transform:scaleX(1.0637);transform-origin:0 0;">Кафедра української мови</span>
<span class="t" id="z3" style="left:1281.00px;top:434.30px;font-size:15.00px;color:#fff;transform:scaleX(0.9801);transform-origin:0 0;">Кафедра української мови</span>
<span class="t" id="z4" style="left:1280.20px;top:597.90px;font-size:15.00px;color:#fff;transform:scaleX(0.9992);transform-origin:0 0;">Юлія Герасименко</span>
</div>
</body>
</html>
